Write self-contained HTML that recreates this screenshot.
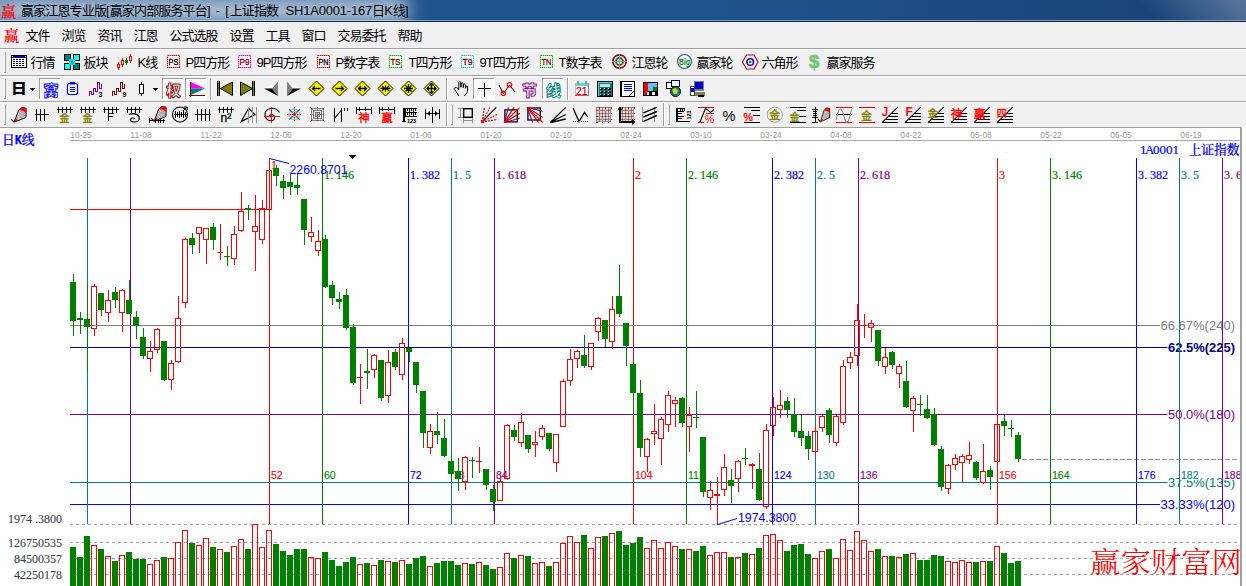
<!DOCTYPE html><html><head><meta charset="utf-8"><title>赢家江恩专业版</title><style>
html,body{margin:0;padding:0}
body{width:1246px;height:586px;overflow:hidden;background:#f0f0f0;position:relative;font-family:"Liberation Sans","Noto Sans CJK SC",sans-serif;font-size:12px;color:#000}
.abs{position:absolute}
#title{left:0;top:0;width:1246px;height:22px;overflow:hidden;background:linear-gradient(90deg,#20548f 0px,#1f538f 700px,#1b467b 1100px,#1a4377 1246px)}
#title .glow{left:-30px;top:-8px;width:440px;height:36px;background:rgba(255,255,255,.5);filter:blur(9px);border-radius:14px}
#title .glow2{left:10px;top:5px;width:395px;height:11px;background:rgba(255,255,255,.22);filter:blur(4px)}
#title .hl{left:0;top:20px;width:1246px;height:1px;background:rgba(255,255,255,.45)}
#title .dk{left:0;top:21px;width:1246px;height:1px;background:#13294a}
#title .shine{right:0;top:0;width:160px;height:20px;background:linear-gradient(225deg,rgba(255,255,255,.28),rgba(255,255,255,0) 60%)}
#title .txt{left:21px;top:3px;font-size:13px;line-height:16px;white-space:nowrap;color:#000;letter-spacing:0}
#title .txt b{font-weight:normal;letter-spacing:-0.85px}
#title .txt i{font-style:normal;letter-spacing:0.8px}
#title .txt u{text-decoration:none;letter-spacing:-0.2px}
.ico{color:#f01020;font-family:"Noto Serif CJK SC",serif;font-weight:700;letter-spacing:0 !important}
#menu{left:0;top:22px;width:1246px;height:26px;background:#f0f0f0}
#menu span{position:absolute;top:7px;line-height:14px;white-space:nowrap;font-size:13px;letter-spacing:-1px}
.sep{left:0;width:1246px;height:1px}
.tb span{position:absolute;line-height:14px;white-space:nowrap;font-size:13px;letter-spacing:-1px}
svg{position:absolute;left:0;top:0}
</style></head><body>
<div id="title" class="abs"><div class="abs glow"></div><div class="abs glow2"></div><div class="abs shine"></div><div class="abs hl"></div><div class="abs dk"></div><span class="abs ico" style="left:1px;top:3px;font-size:15px;line-height:16px">赢</span><span class="abs txt"><b>赢家江恩专业版</b>[<b>赢家内部服务平台</b><i>] - [</i><b>上证指数</b>&nbsp; <u>SH1A0001-167</u><b>日</b>K<b>线</b>]</span></div>
<div id="menu" class="abs"><span class="ico" style="left:4px;top:5px;font-size:15px;line-height:16px">赢</span>
<span style="left:25.5px">文件</span>
<span style="left:61.5px">浏览</span>
<span style="left:97.5px">资讯</span>
<span style="left:133.5px">江恩</span>
<span style="left:169.5px">公式选股</span>
<span style="left:229.5px">设置</span>
<span style="left:265.5px">工具</span>
<span style="left:301.5px">窗口</span>
<span style="left:337.5px">交易委托</span>
<span style="left:397.5px">帮助</span>
</div>
<div class="abs sep" style="top:48px;background:#a0a0a0"></div><div class="abs sep" style="top:49px;background:#fff"></div>
<div class="abs sep" style="top:75px;background:#a0a0a0"></div><div class="abs sep" style="top:76px;background:#fff"></div>
<div class="abs sep" style="top:101px;background:#a0a0a0"></div><div class="abs sep" style="top:102px;background:#fff"></div>
<div class="abs sep" style="top:127px;background:#a0a0a0"></div>
<div class="tb">
<span style="left:30.5px;top:56px">行情</span>
<span style="left:83.5px;top:56px">板块</span>
<span style="left:137.5px;top:56px">K线</span>
<span style="left:185.5px;top:56px">P四方形</span>
<span style="left:256.5px;top:56px">9P四方形</span>
<span style="left:335.5px;top:56px">P数字表</span>
<span style="left:408.5px;top:56px">T四方形</span>
<span style="left:479.5px;top:56px">9T四方形</span>
<span style="left:558.5px;top:56px">T数字表</span>
<span style="left:631.5px;top:56px">江恩轮</span>
<span style="left:696.5px;top:56px">赢家轮</span>
<span style="left:761.5px;top:56px">六角形</span>
<span style="left:826.5px;top:56px">赢家服务</span>
</div>
<svg width="1246" height="586" viewBox="0 0 1246 586" shape-rendering="crispEdges">
<g><rect x="4" y="52" width="1" height="21" fill="#ffffff"/><rect x="5" y="52" width="1" height="21" fill="#a0a0a0"/><rect x="4" y="72" width="2" height="1" fill="#a0a0a0"/><rect x="11" y="55" width="16" height="13" fill="#000"/><rect x="12" y="56" width="14" height="11" fill="#fff"/><rect x="12" y="56" width="14" height="2" fill="#0000c0"/><rect x="13" y="59" width="2" height="1" fill="#000"/><rect x="16" y="59" width="2" height="1" fill="#000"/><rect x="19" y="59" width="2" height="1" fill="#000"/><rect x="22" y="59" width="2" height="1" fill="#000"/><rect x="13" y="61" width="2" height="1" fill="#000"/><rect x="16" y="61" width="2" height="1" fill="#000"/><rect x="19" y="61" width="2" height="1" fill="#000"/><rect x="22" y="61" width="2" height="1" fill="#000"/><rect x="13" y="63" width="2" height="1" fill="#000"/><rect x="16" y="63" width="2" height="1" fill="#000"/><rect x="19" y="63" width="2" height="1" fill="#000"/><rect x="22" y="63" width="2" height="1" fill="#000"/><rect x="13" y="65" width="2" height="1" fill="#000"/><rect x="16" y="65" width="2" height="1" fill="#000"/><rect x="19" y="65" width="2" height="1" fill="#000"/><rect x="22" y="65" width="2" height="1" fill="#000"/><rect x="12" y="56" width="1" height="1" fill="#fff"/><rect x="25" y="56" width="1" height="1" fill="#fff"/><rect x="64" y="54" width="7" height="7" fill="#000"/><rect x="65" y="55" width="5" height="5" fill="#008080"/><rect x="73" y="54" width="7" height="7" fill="#000"/><rect x="74" y="55" width="5" height="5" fill="#00ffff"/><rect x="64" y="63" width="7" height="7" fill="#000"/><rect x="65" y="64" width="5" height="5" fill="#00ffff"/><rect x="73" y="63" width="7" height="7" fill="#000"/><rect x="74" y="64" width="5" height="5" fill="#008080"/><rect x="69" y="59" width="6" height="6" fill="#00e0e0"/><rect x="71" y="61" width="2" height="2" fill="#008080"/><rect x="118" y="62" width="1" height="8" fill="#ff0000"/><rect x="117" y="64" width="3" height="4" fill="#ff0000"/><rect x="118" y="65" width="1" height="2" fill="#fff"/><rect x="122" y="58" width="1" height="9" fill="#ff0000"/><rect x="121" y="60" width="3" height="5" fill="#ff0000"/><rect x="122" y="61" width="1" height="3" fill="#fff"/><rect x="126" y="58" width="1" height="7" fill="#008000"/><rect x="125" y="60" width="3" height="3" fill="#008000"/><rect x="130" y="54" width="1" height="9" fill="#ff0000"/><rect x="129" y="56" width="3" height="5" fill="#ff0000"/><rect x="130" y="57" width="1" height="3" fill="#fff"/><rect x="167" y="55" width="13" height="13" fill="#fff"/><rect x="167.5" y="55.5" width="12" height="12" fill="none" stroke="#ff0000" stroke-width="1" stroke-dasharray="1 1"/><rect x="167.5" y="55.5" width="12" height="12" fill="none" stroke="#ff0000" stroke-width="1" opacity="0.55"/><text x="173.5" y="65" font-size="8.5" fill="#000" font-family="Liberation Sans, sans-serif" text-anchor="middle" style="shape-rendering:geometricPrecision" textLength="10" lengthAdjust="spacingAndGlyphs" stroke="#000" stroke-width="0.3">PS</text><rect x="238" y="55" width="13" height="13" fill="#fff"/><rect x="238.5" y="55.5" width="12" height="12" fill="none" stroke="#ff00ff" stroke-width="1" stroke-dasharray="1 1"/><rect x="238.5" y="55.5" width="12" height="12" fill="none" stroke="#ff00ff" stroke-width="1" opacity="0.55"/><text x="244.5" y="65" font-size="8.5" fill="#800000" font-family="Liberation Sans, sans-serif" text-anchor="middle" style="shape-rendering:geometricPrecision" textLength="10" lengthAdjust="spacingAndGlyphs" stroke="#800000" stroke-width="0.3">P9</text><rect x="317" y="55" width="13" height="13" fill="#fff"/><rect x="317.5" y="55.5" width="12" height="12" fill="none" stroke="#ff0000" stroke-width="1" stroke-dasharray="1 1"/><rect x="317.5" y="55.5" width="12" height="12" fill="none" stroke="#ff0000" stroke-width="1" opacity="0.55"/><text x="323.5" y="65" font-size="8.5" fill="#000" font-family="Liberation Sans, sans-serif" text-anchor="middle" style="shape-rendering:geometricPrecision" textLength="10" lengthAdjust="spacingAndGlyphs" stroke="#000" stroke-width="0.3">PN</text><rect x="389" y="55" width="13" height="13" fill="#fff"/><rect x="389.5" y="55.5" width="12" height="12" fill="none" stroke="#00c000" stroke-width="1" stroke-dasharray="1 1"/><rect x="389.5" y="55.5" width="12" height="12" fill="none" stroke="#00c000" stroke-width="1" opacity="0.55"/><text x="395.5" y="65" font-size="8.5" fill="#800000" font-family="Liberation Sans, sans-serif" text-anchor="middle" style="shape-rendering:geometricPrecision" textLength="10" lengthAdjust="spacingAndGlyphs" stroke="#800000" stroke-width="0.3">TS</text><rect x="461" y="55" width="13" height="13" fill="#fff"/><rect x="461.5" y="55.5" width="12" height="12" fill="none" stroke="#00d0d0" stroke-width="1" stroke-dasharray="1 1"/><rect x="461.5" y="55.5" width="12" height="12" fill="none" stroke="#00d0d0" stroke-width="1" opacity="0.55"/><text x="467.5" y="65" font-size="8.5" fill="#800000" font-family="Liberation Sans, sans-serif" text-anchor="middle" style="shape-rendering:geometricPrecision" textLength="10" lengthAdjust="spacingAndGlyphs" stroke="#800000" stroke-width="0.3">T9</text><rect x="540" y="55" width="13" height="13" fill="#fff"/><rect x="540.5" y="55.5" width="12" height="12" fill="none" stroke="#00c000" stroke-width="1" stroke-dasharray="1 1"/><rect x="540.5" y="55.5" width="12" height="12" fill="none" stroke="#00c000" stroke-width="1" opacity="0.55"/><text x="546.5" y="65" font-size="8.5" fill="#800000" font-family="Liberation Sans, sans-serif" text-anchor="middle" style="shape-rendering:geometricPrecision" textLength="10" lengthAdjust="spacingAndGlyphs" stroke="#800000" stroke-width="0.3">TN</text><g style="shape-rendering:geometricPrecision"><circle cx="619.5" cy="61.5" r="6.7" fill="#f4eaea" stroke="#7b1020" stroke-width="1.7"/><circle cx="619.5" cy="61.5" r="3.6" fill="#f0f0f0" stroke="#0a6a1a" stroke-width="1.6"/><circle cx="619.5" cy="61.5" r="1.3" fill="#f08060"/><path d="M612 61.5h15M619.5 54v15" stroke="#909090" stroke-width="0.8"/></g><g style="shape-rendering:geometricPrecision"><circle cx="684.5" cy="61.5" r="7" fill="#f4f8f8" stroke="#2a5a80" stroke-width="1.2"/><text x="684.5" y="65" font-size="8.5" fill="#208020" font-family="Liberation Sans, sans-serif" text-anchor="middle" font-weight="bold" textLength="11" lengthAdjust="spacingAndGlyphs">Big</text></g><g style="shape-rendering:geometricPrecision"><path d="M742.5 62l4-7h7.5l4 7l-4 7h-7.5z" fill="#f6f0f0" stroke="#b01020" stroke-width="1.2"/><circle cx="750.2" cy="62" r="3.3" fill="#fff" stroke="#0000c0" stroke-width="1.5"/><circle cx="750.2" cy="62" r="1.3" fill="#008000"/></g><text x="809" y="68.2" font-size="18.5" fill="#78c478" font-family="Liberation Sans, sans-serif" font-weight="bold" stroke="#78c478" stroke-width="0.7" style="shape-rendering:geometricPrecision">$</text><rect x="4" y="79" width="1" height="20" fill="#ffffff"/><rect x="5" y="79" width="1" height="20" fill="#a0a0a0"/><rect x="4" y="98" width="2" height="1" fill="#a0a0a0"/><g transform="translate(10.9,93.2) scale(1.22,1.06)"><text x="0" y="0" font-size="13" fill="#000" font-family="Noto Sans CJK SC, sans-serif" font-weight="900" style="shape-rendering:geometricPrecision">日</text></g><path d="M30 88h5l-2.5 3z" fill="#000"/><rect x="39" y="78" width="22" height="22" fill="#f9f9f9"/><rect x="39" y="78" width="22" height="1" fill="#a0a0a0"/><rect x="39" y="78" width="1" height="22" fill="#a0a0a0"/><rect x="39" y="99" width="22" height="1" fill="#ffffff"/><rect x="60" y="78" width="1" height="22" fill="#ffffff"/><text x="43.5" y="95.5" font-size="15" fill="#fafafa" font-family="Noto Sans CJK SC, sans-serif" font-weight="900" stroke-width="0.9" stroke="#0000ff" style="shape-rendering:geometricPrecision">窝</text><g style="shape-rendering:geometricPrecision"><rect x="67.5" y="83.5" width="10" height="11" rx="2" fill="#fff" stroke="#0000ff" stroke-width="1.2"/><rect x="70" y="82" width="5" height="2.5" fill="#0000ff"/><path d="M70 87.5h5M70 89.5h5M70 91.5h5" stroke="#0000ff" stroke-width="1"/></g><path d="M89.5 96V91.5H91.5V94.5H93.5V88.5H95.5V91.5H97.5V82.5H99.5V88.5H101.5V84" stroke="#800080" fill="none" stroke-width="1" /><text x="98.5" y="97" font-size="7" fill="#000" font-family="Liberation Sans, sans-serif" font-weight="bold" style="shape-rendering:geometricPrecision">3</text><path d="M112.5 96V91.5H114.5V94.5H116.5V88.5H118.5V91.5H120.5V82.5H122.5V88.5H124.5V84" stroke="#800000" fill="none" stroke-width="1" /><text x="122.5" y="97" font-size="7" fill="#000" font-family="Liberation Sans, sans-serif" font-weight="bold" style="shape-rendering:geometricPrecision">9</text><rect x="141" y="82" width="1" height="14" fill="#000"/><rect x="139" y="84" width="5" height="10" fill="#000"/><rect x="140" y="85" width="3" height="8" fill="#fff"/><path d="M153 88h5l-2.5 3z" fill="#000"/><rect x="162" y="78" width="22" height="22" fill="#f9f9f9"/><rect x="162" y="78" width="22" height="1" fill="#a0a0a0"/><rect x="162" y="78" width="1" height="22" fill="#a0a0a0"/><rect x="162" y="99" width="22" height="1" fill="#ffffff"/><rect x="183" y="78" width="1" height="22" fill="#ffffff"/><text x="166" y="95.5" font-size="15" fill="#fafafa" font-family="Noto Sans CJK SC, sans-serif" font-weight="900" stroke-width="0.9" stroke="#800000" style="shape-rendering:geometricPrecision">权</text><rect x="185" y="78" width="22" height="22" fill="#f9f9f9"/><rect x="185" y="78" width="22" height="1" fill="#a0a0a0"/><rect x="185" y="78" width="1" height="22" fill="#a0a0a0"/><rect x="185" y="99" width="22" height="1" fill="#ffffff"/><rect x="206" y="78" width="1" height="22" fill="#ffffff"/><path d="M191 82L205 88.5H191z" fill="#ff00ff" style="shape-rendering:geometricPrecision"/><path d="M191 88.5H205L191 95z" fill="#008080" style="shape-rendering:geometricPrecision"/><rect x="190" y="82" width="1" height="15" fill="#800000"/><rect x="189" y="95" width="16" height="1" fill="#800000"/><rect x="210" y="78" width="1" height="22" fill="#a0a0a0"/><rect x="211" y="78" width="1" height="22" fill="#ffffff"/><path d="M232.5 82L220.5 88.5L232.5 95.5z" fill="#808000" stroke="#000" stroke-width="1" style="shape-rendering:geometricPrecision"/><rect x="217" y="81" width="3" height="15" fill="#000"/><rect x="218" y="81" width="1" height="15" fill="#808000"/><path d="M240.5 82L252.5 88.5L240.5 95.5z" fill="#808000" stroke="#000" stroke-width="1" style="shape-rendering:geometricPrecision"/><rect x="252" y="81" width="3" height="15" fill="#000"/><rect x="253" y="81" width="1" height="15" fill="#808000"/><g style="shape-rendering:geometricPrecision"><path d="M264 88.5L278 81.5L272 88.5z" fill="#fff"/><path d="M278 81.5V96L272 88.5z" fill="#808080"/><path d="M264 88.5H272L278 96z" fill="#000"/><path d="M301 88.5L287 81.5L293 88.5z" fill="#fff"/><path d="M287 81.5V96L293 88.5z" fill="#808080"/><path d="M301 88.5H293L287 96z" fill="#000"/></g><path d="M309.0 88.5L316.5 81.0L324.0 88.5L316.5 96.0z" fill="#ffff00" stroke="#000" stroke-width="1" style="shape-rendering:geometricPrecision"/><path d="M320.5 88.5H312.5M315.0 86.0L312.5 88.5L315.0 91.0" stroke="#000" fill="none" stroke-width="1.3" style="shape-rendering:geometricPrecision"/><path d="M332.0 88.5L339.5 81.0L347.0 88.5L339.5 96.0z" fill="#ffff00" stroke="#000" stroke-width="1" style="shape-rendering:geometricPrecision"/><path d="M335.5 88.5H343.5M341.0 86.0L343.5 88.5L341.0 91.0" stroke="#000" fill="none" stroke-width="1.3" style="shape-rendering:geometricPrecision"/><path d="M355.0 88.5L362.5 81.0L370.0 88.5L362.5 96.0z" fill="#ffff00" stroke="#000" stroke-width="1" style="shape-rendering:geometricPrecision"/><path d="M366.5 88.5H358.5M361.0 86.0L358.5 88.5L361.0 91.0M358.5 88.5H366.5M364.0 86.0L366.5 88.5L364.0 91.0" stroke="#000" fill="none" stroke-width="1.3" style="shape-rendering:geometricPrecision"/><path d="M378.0 88.5L385.5 81.0L393.0 88.5L385.5 96.0z" fill="#ffff00" stroke="#000" stroke-width="1" style="shape-rendering:geometricPrecision"/><path d="M380.5 88.5H390.5M382.0 86.0L384.5 88.5L382.0 91.0M389.0 86.0L386.5 88.5L389.0 91.0M385.5 85.5V91.5" stroke="#000" fill="none" stroke-width="1.3" style="shape-rendering:geometricPrecision"/><path d="M401.0 88.5L408.5 81.0L416.0 88.5L408.5 96.0z" fill="#ffff00" stroke="#000" stroke-width="1" style="shape-rendering:geometricPrecision"/><path d="M404.0 88.5H413.0M408.5 84.0V93.0M405.5 85.5L411.5 91.5M405.5 91.5L411.5 85.5" stroke="#000" fill="none" stroke-width="1.3" style="shape-rendering:geometricPrecision"/><path d="M424.0 88.5L431.5 81.0L439.0 88.5L431.5 96.0z" fill="#ffff00" stroke="#000" stroke-width="1" style="shape-rendering:geometricPrecision"/><path d="M427.0 88.5H436.0M431.5 83.5V93.5M429.5 85.5L431.5 83.5L433.5 85.5M429.5 91.5L431.5 93.5L433.5 91.5M429.0 86.5L427.0 88.5L429.0 90.5M434.0 86.5L436.0 88.5L434.0 90.5" stroke="#000" fill="none" stroke-width="1.3" style="shape-rendering:geometricPrecision"/><rect x="446" y="78" width="1" height="22" fill="#a0a0a0"/><rect x="447" y="78" width="1" height="22" fill="#ffffff"/><path d="M459 96L456 91.5L454 88.8Q454.5 87 456.5 87.5L458.8 89.5V82.5Q459.7 80.6 460.8 82.5V87.5M461 87V83.5Q462.2 82 463.2 83.5V87.8M463.5 87.5V84.6Q464.6 83.3 465.5 84.8V88.5M465.8 88V86.4Q467 85.3 467.6 87V91.5L464.5 96" stroke="#000" fill="none" stroke-width="1" style="shape-rendering:geometricPrecision"/><rect x="473" y="78" width="22" height="22" fill="#f9f9f9"/><rect x="473" y="78" width="22" height="1" fill="#a0a0a0"/><rect x="473" y="78" width="1" height="22" fill="#a0a0a0"/><rect x="473" y="99" width="22" height="1" fill="#ffffff"/><rect x="494" y="78" width="1" height="22" fill="#ffffff"/><rect x="478" y="88" width="13" height="1" fill="#000"/><rect x="484" y="83" width="1" height="14" fill="#000"/><path d="M499 85L503.3 93.5L509.5 85L515 92" stroke="#000" fill="none" stroke-width="1" style="shape-rendering:geometricPrecision"/><g style="shape-rendering:geometricPrecision"><circle cx="503.3" cy="93.3" r="2.2" fill="none" stroke="#ff0000" stroke-width="1.2"/><circle cx="509.5" cy="84.7" r="2.2" fill="none" stroke="#ff0000" stroke-width="1.2"/></g><text x="522" y="95.5" font-size="15" fill="#fafafa" font-family="Noto Sans CJK SC, sans-serif" font-weight="900" stroke-width="0.9" stroke="#800080" style="shape-rendering:geometricPrecision">节</text><rect x="542" y="78" width="22" height="22" fill="#f9f9f9"/><rect x="542" y="78" width="22" height="1" fill="#a0a0a0"/><rect x="542" y="78" width="1" height="22" fill="#a0a0a0"/><rect x="542" y="99" width="22" height="1" fill="#ffffff"/><rect x="563" y="78" width="1" height="22" fill="#ffffff"/><text x="546" y="95.5" font-size="15" fill="#fafafa" font-family="Noto Sans CJK SC, sans-serif" font-weight="900" stroke-width="0.9" stroke="#008080" style="shape-rendering:geometricPrecision">线</text><rect x="567" y="78" width="1" height="22" fill="#a0a0a0"/><rect x="568" y="78" width="1" height="22" fill="#ffffff"/><rect x="575" y="83" width="14" height="13" fill="#808080"/><rect x="575" y="83" width="13" height="12" fill="#fff"/><rect x="575" y="83" width="13" height="3" fill="#40e0e0"/><rect x="575" y="83" width="1" height="12" fill="#c0c0c0"/><rect x="577" y="81" width="2" height="3" fill="#909090"/><rect x="585" y="81" width="2" height="3" fill="#909090"/><text x="581.7" y="95" font-size="10.5" fill="#ff0000" font-family="Liberation Sans, sans-serif" text-anchor="middle" textLength="11.5" lengthAdjust="spacingAndGlyphs" stroke="#ff0000" stroke-width="0.3" style="shape-rendering:geometricPrecision">21</text><rect x="597" y="81" width="16" height="16" fill="#000"/><rect x="598" y="82" width="14" height="14" fill="#008080"/><rect x="598" y="82" width="1" height="14" fill="#40e0e0"/><rect x="598" y="82" width="14" height="1" fill="#40e0e0"/><rect x="600" y="84" width="10" height="3" fill="#d8d8d8"/><rect x="600" y="88" width="3" height="2" fill="#000"/><rect x="600" y="88" width="1" height="1" fill="#e0e0e0"/><rect x="604" y="88" width="3" height="2" fill="#000"/><rect x="604" y="88" width="1" height="1" fill="#e0e0e0"/><rect x="608" y="88" width="3" height="2" fill="#000"/><rect x="608" y="88" width="1" height="1" fill="#e0e0e0"/><rect x="600" y="91" width="3" height="2" fill="#000"/><rect x="600" y="91" width="1" height="1" fill="#e0e0e0"/><rect x="604" y="91" width="3" height="2" fill="#000"/><rect x="604" y="91" width="1" height="1" fill="#e0e0e0"/><rect x="608" y="91" width="3" height="2" fill="#000"/><rect x="608" y="91" width="1" height="1" fill="#e0e0e0"/><rect x="600" y="94" width="3" height="2" fill="#000"/><rect x="600" y="94" width="1" height="1" fill="#e0e0e0"/><rect x="604" y="94" width="3" height="2" fill="#000"/><rect x="604" y="94" width="1" height="1" fill="#e0e0e0"/><rect x="608" y="94" width="3" height="2" fill="#000"/><rect x="608" y="94" width="1" height="1" fill="#e0e0e0"/><rect x="620" y="81" width="15" height="16" fill="#000"/><rect x="622" y="82" width="12" height="14" fill="#fff"/><rect x="624" y="84" width="8" height="1" fill="#0000ff"/><rect x="624" y="86" width="8" height="1" fill="#0000ff"/><rect x="624" y="88" width="8" height="1" fill="#0000ff"/><rect x="624" y="90" width="8" height="1" fill="#0000ff"/><path d="M629 96L634 91" stroke="#000" fill="none" stroke-width="1" style="shape-rendering:geometricPrecision"/><rect x="643" y="82" width="15" height="14" fill="#000"/><rect x="644" y="83" width="4" height="12" fill="#ff0000"/><rect x="648" y="83" width="9" height="8" fill="#60c0ff"/><rect x="653" y="87" width="4" height="4" fill="#008000"/><rect x="647" y="92" width="8" height="3" fill="#fff"/><rect x="649" y="92" width="3" height="3" fill="#000"/><rect x="666" y="82" width="9" height="7" fill="#000"/><rect x="667" y="83" width="7" height="5" fill="#fff"/><rect x="671" y="80" width="9" height="7" fill="#000080"/><rect x="672" y="81" width="7" height="5" fill="#fff"/><circle cx="675.5" cy="91.5" r="5" fill="#008080" stroke="#000" stroke-width="1" style="shape-rendering:geometricPrecision"/><path d="M672 90l3-2l3 2l-1 4l-3 0z" fill="#e0d020" style="shape-rendering:geometricPrecision"/><rect x="694" y="81" width="10" height="10" fill="#808080"/><rect x="695" y="82" width="8" height="7" fill="#0000d0"/><rect x="692" y="92" width="13" height="4" fill="#808060"/><rect x="690" y="86" width="5" height="10" fill="#fff"/><rect x="690" y="88" width="5" height="4" fill="#0000c0"/><path d="M690.5 86.5h4v9h-4z" stroke="#404040" fill="none" stroke-width="1" /><rect x="698" y="95" width="6" height="2" fill="#000"/><rect x="4" y="105" width="1" height="20" fill="#ffffff"/><rect x="5" y="105" width="1" height="20" fill="#a0a0a0"/><rect x="4" y="124" width="2" height="1" fill="#a0a0a0"/><g style="shape-rendering:geometricPrecision" transform="translate(11,107)"><path d="M3.4 14.6L7.6 3.3L11 0.4L15 1.3V10.4L6.8 13.8z" fill="#c4c4c4" stroke="#000" stroke-width="1"/><path d="M8.5 6l5.5 3M7.5 8.5l5 3M10 4.5l4.5 2" stroke="#8a8a8a" stroke-width="0.8"/><path d="M7.6 3.3L11 0.4L15.3 1.3V5.8L11.8 3.8z" fill="#ff0000"/><path d="M3.4 14.6L4.7 11L7.2 13.5z" fill="#ff0000"/><path d="M0 12.1L3.4 15.4" stroke="#000" stroke-width="1.2"/></g><rect x="35" y="114" width="14" height="1" fill="#000"/><rect x="36" y="109" width="1" height="12" fill="#000"/><rect x="40" y="109" width="1" height="12" fill="#000"/><rect x="44" y="109" width="1" height="12" fill="#000"/><rect x="57" y="109" width="16" height="1" fill="#000"/><rect x="58" y="107" width="1" height="6" fill="#000"/><rect x="62" y="107" width="1" height="6" fill="#000"/><rect x="66" y="107" width="1" height="6" fill="#000"/><rect x="70" y="107" width="1" height="6" fill="#000"/><text x="59.5" y="121.5" font-size="10" fill="#808000" font-family="Noto Sans CJK SC, sans-serif" stroke="#808000" stroke-width="0.35" style="shape-rendering:geometricPrecision">金</text><rect x="80" y="109" width="16" height="1" fill="#000"/><rect x="81" y="107" width="1" height="6" fill="#000"/><rect x="85" y="107" width="1" height="6" fill="#000"/><rect x="89" y="107" width="1" height="6" fill="#000"/><rect x="93" y="107" width="1" height="6" fill="#000"/><text x="82.5" y="121.5" font-size="10" fill="#808000" font-family="Noto Sans CJK SC, sans-serif" stroke="#808000" stroke-width="0.35" style="shape-rendering:geometricPrecision">金</text><rect x="103" y="109" width="16" height="1" fill="#000"/><rect x="104" y="107" width="1" height="6" fill="#000"/><rect x="108" y="107" width="1" height="6" fill="#000"/><rect x="112" y="107" width="1" height="6" fill="#000"/><rect x="116" y="107" width="1" height="6" fill="#000"/><rect x="108" y="113" width="1" height="8" fill="#000"/><rect x="108" y="113" width="6" height="1" fill="#000"/><rect x="108" y="116" width="5" height="1" fill="#000"/><rect x="126" y="109" width="16" height="1" fill="#000"/><rect x="127" y="107" width="1" height="6" fill="#000"/><rect x="131" y="107" width="1" height="6" fill="#000"/><rect x="135" y="107" width="1" height="6" fill="#000"/><rect x="139" y="107" width="1" height="6" fill="#000"/><path d="M128.8 114.5Q136 112 139 116.5Q140.5 121.5 135 122Q130 122 130.5 119.5Q131.5 117 135 118.7" stroke="#000" fill="none" stroke-width="1.2" style="shape-rendering:geometricPrecision"/><g style="shape-rendering:geometricPrecision" transform="translate(151,106)"><path d="M3.4 14.6L7.6 3.3L11 0.4L15 1.3V10.4L6.8 13.8z" fill="#c4c4c4" stroke="#000" stroke-width="1"/><path d="M8.5 6l5.5 3M7.5 8.5l5 3M10 4.5l4.5 2" stroke="#8a8a8a" stroke-width="0.8"/><path d="M7.6 3.3L11 0.4L15.3 1.3V5.8L11.8 3.8z" fill="#ff0000"/><path d="M3.4 14.6L4.7 11L7.2 13.5z" fill="#ff0000"/><path d="M0 12.1L3.4 15.4" stroke="#000" stroke-width="1.2"/></g><rect x="149" y="120" width="16" height="1" fill="#000"/><rect x="149" y="118" width="1" height="5" fill="#000"/><rect x="155.0" y="118.5" width="1" height="4" fill="#000"/><rect x="157.5" y="118.5" width="1" height="4" fill="#000"/><rect x="160.0" y="118.5" width="1" height="4" fill="#000"/><rect x="162.5" y="118.5" width="1" height="4" fill="#000"/><circle cx="180" cy="114.5" r="7.5" fill="none" stroke="#000" stroke-width="1.1" style="shape-rendering:geometricPrecision"/><rect x="174" y="114" width="13" height="1" fill="#000"/><rect x="175" y="111" width="1" height="7" fill="#000"/><rect x="177" y="112" width="1" height="5" fill="#000"/><rect x="179" y="111" width="1" height="7" fill="#000"/><rect x="181" y="112" width="1" height="5" fill="#000"/><rect x="183" y="111" width="1" height="7" fill="#000"/><rect x="185" y="112" width="1" height="5" fill="#000"/><path d="M183 111L187 107M184 107h3.3v3" stroke="#000" fill="none" stroke-width="1" style="shape-rendering:geometricPrecision"/><rect x="195" y="114" width="16" height="1" fill="#000"/><rect x="197" y="109" width="1" height="12" fill="#000"/><rect x="201" y="109" width="1" height="12" fill="#000"/><rect x="205" y="109" width="1" height="12" fill="#000"/><rect x="209" y="109" width="1" height="12" fill="#000"/><rect x="218" y="109" width="16" height="1" fill="#000"/><rect x="219" y="107" width="1" height="6" fill="#000"/><rect x="223" y="107" width="1" height="6" fill="#000"/><rect x="227" y="107" width="1" height="6" fill="#000"/><rect x="231" y="107" width="1" height="6" fill="#000"/><text x="220.5" y="122.3" font-size="12" fill="#000" font-family="Liberation Sans, sans-serif" stroke="#000" stroke-width="0.3" style="shape-rendering:geometricPrecision">n²</text><path d="M241.2 121.6L248.7 108.3L255 114.5z" stroke="#000" fill="none" stroke-width="1.1" style="shape-rendering:geometricPrecision"/><rect x="248" y="107" width="1" height="16" fill="#909090"/><rect x="252" y="107" width="1" height="16" fill="#909090"/><rect x="256" y="107" width="1" height="16" fill="#909090"/><g style="shape-rendering:geometricPrecision"><path d="M279.6 112.4Q276 107.5 271 108.3Q265 109.5 265 114.5Q265.5 120.5 270.5 120.8Q274.6 120.5 274.6 117.5Q274 114.5 271.5 114.5Q269 115 269 117" fill="none" stroke="#000" stroke-width="1.1"/></g><rect x="264" y="116" width="16" height="1" fill="#ff0000"/><rect x="271" y="107" width="1" height="16" fill="#ff0000"/><g style="shape-rendering:geometricPrecision"><circle cx="294.5" cy="114.5" r="5.5" fill="none" stroke="#909090" stroke-width="0.8"/><circle cx="294.5" cy="114.5" r="3" fill="none" stroke="#909090" stroke-width="0.8"/><path d="M287.0 114.5H302.0M294.5 107.0V122.0" stroke="#ff0000" stroke-dasharray="1.5 1"/><path d="M289.2 109.2L299.8 119.8M289.2 119.8L299.8 109.2" stroke="#008080" stroke-width="1.3" stroke-dasharray="5 1 3 1 5"/><circle cx="294.5" cy="114.5" r="1.3" fill="#ff0000"/></g><g><rect x="311.5" y="108.5" width="12" height="12" fill="none" stroke="#808080"/><rect x="313.5" y="110.5" width="8" height="8" fill="none" stroke="#808080"/><rect x="315.5" y="112.5" width="4" height="4" fill="none" stroke="#808080"/></g><g style="shape-rendering:geometricPrecision"><path d="M310.0 114.5H325.0M317.5 107.0V122.0" stroke="#008080" stroke-dasharray="1.5 1"/><path d="M310.5 107.5L324.5 121.5M310.5 121.5L324.5 107.5" stroke="#ff0000" stroke-dasharray="1.5 1.5"/></g><rect x="334" y="108" width="1" height="14" fill="#000"/><rect x="341" y="108" width="1" height="14" fill="#000"/><path d="M334.5 118.3L341.6 110" stroke="#000" fill="none" stroke-width="1.1" style="shape-rendering:geometricPrecision"/><rect x="344" y="108" width="1" height="3" fill="#000"/><rect x="347" y="108" width="1" height="3" fill="#000"/><rect x="356" y="109" width="16" height="1" fill="#000"/><rect x="356" y="107" width="1" height="7" fill="#000"/><rect x="359" y="107" width="1" height="4" fill="#000"/><rect x="365" y="107" width="1" height="4" fill="#000"/><rect x="371" y="107" width="1" height="7" fill="#000"/><text x="358.5" y="122" font-size="11" fill="#ff0000" font-family="Noto Sans CJK SC, sans-serif" stroke="#ff0000" stroke-width="0.35" style="shape-rendering:geometricPrecision">神</text><rect x="379" y="109" width="16" height="1" fill="#000"/><rect x="379" y="107" width="1" height="7" fill="#000"/><rect x="382" y="107" width="1" height="4" fill="#000"/><rect x="388" y="107" width="1" height="4" fill="#000"/><rect x="394" y="107" width="1" height="7" fill="#000"/><text x="381.5" y="122" font-size="11" fill="#ff0000" font-family="Noto Sans CJK SC, sans-serif" stroke="#ff0000" stroke-width="0.35" style="shape-rendering:geometricPrecision">赢</text><rect x="403" y="108" width="2" height="14" fill="#000"/><rect x="403" y="108" width="14" height="1" fill="#000"/><rect x="405" y="108" width="1" height="4" fill="#000"/><rect x="407" y="108" width="1" height="3" fill="#000"/><rect x="409" y="108" width="1" height="4" fill="#000"/><rect x="411" y="108" width="1" height="3" fill="#000"/><rect x="413" y="108" width="1" height="4" fill="#000"/><rect x="415" y="108" width="1" height="3" fill="#000"/><rect x="405" y="112" width="12" height="1" fill="#000"/><rect x="405" y="112" width="1" height="4" fill="#000"/><rect x="407" y="112" width="1" height="3" fill="#000"/><rect x="409" y="112" width="1" height="4" fill="#000"/><rect x="411" y="112" width="1" height="3" fill="#000"/><rect x="413" y="112" width="1" height="4" fill="#000"/><rect x="415" y="112" width="1" height="3" fill="#000"/><rect x="405" y="116" width="12" height="1" fill="#000"/><rect x="402" y="121" width="4" height="1" fill="#000"/><text x="407" y="122.5" font-size="5.5" fill="#000" font-family="Liberation Sans, sans-serif" font-weight="bold" style="shape-rendering:geometricPrecision">123</text><rect x="425" y="109" width="1" height="10" fill="#000"/><rect x="439" y="109" width="1" height="10" fill="#000"/><rect x="432" y="107" width="1" height="16" fill="#000"/><rect x="426" y="113" width="13" height="1" fill="#000"/><path d="M427 113.5l3-2.5v5zM438 113.5l-3-2.5v5z" fill="#000" style="shape-rendering:geometricPrecision"/><rect x="446" y="103" width="1" height="23" fill="#a0a0a0"/><rect x="447" y="103" width="1" height="23" fill="#ffffff"/><rect x="451" y="105" width="1" height="20" fill="#ffffff"/><rect x="452" y="105" width="1" height="20" fill="#a0a0a0"/><rect x="451" y="124" width="2" height="1" fill="#a0a0a0"/><rect x="463.7" y="108.7" width="8.6" height="8.6" fill="none" stroke="#000" stroke-width="1.4" style="shape-rendering:geometricPrecision"/><rect x="460" y="108" width="1" height="10" fill="#909090"/><rect x="458" y="108" width="5" height="1" fill="#909090"/><rect x="458" y="117" width="5" height="1" fill="#909090"/><rect x="463" y="120" width="10" height="1" fill="#909090"/><rect x="463" y="118" width="1" height="5" fill="#909090"/><rect x="472" y="118" width="1" height="5" fill="#909090"/><path d="M482 122L484.5 107.4M482 122L497 119.5" stroke="#900000" fill="none" stroke-width="1.1" style="shape-rendering:geometricPrecision" stroke-dasharray="2 1"/><path d="M482 122L490 107.4M482 122L497 114.5" stroke="#ff0000" fill="none" stroke-width="1.1" style="shape-rendering:geometricPrecision" stroke-dasharray="2 1"/><path d="M482 122L496.2 107.4" stroke="#000" fill="none" stroke-width="1.1" style="shape-rendering:geometricPrecision"/><rect x="481" y="120" width="3" height="3" fill="#ff0000"/><rect x="504.9" y="109.9" width="12.4" height="12" fill="none" stroke="#000" stroke-width="1.3" style="shape-rendering:geometricPrecision"/><path d="M504.3 122.5L508.5 107.4M504.3 122.5L519.8 118.3" stroke="#800080" fill="none" stroke-width="1.1" style="shape-rendering:geometricPrecision"/><path d="M504.3 122.5L514 107.4M504.3 122.5L519.8 113.3" stroke="#900000" fill="none" stroke-width="1.1" style="shape-rendering:geometricPrecision"/><path d="M504.3 122.5L519.4 107.8" stroke="#ff0000" fill="none" stroke-width="1.2" style="shape-rendering:geometricPrecision"/><rect x="527.9" y="108" width="12.4" height="12" fill="none" stroke="#000" stroke-width="1.3" style="shape-rendering:geometricPrecision"/><path d="M527.3 107.4L532.7 122.5M527.3 107.4L542.7 111.2" stroke="#800080" fill="none" stroke-width="1.1" style="shape-rendering:geometricPrecision"/><path d="M527.3 107.4L538.6 122.5M527.3 107.4L542.7 117.4" stroke="#900000" fill="none" stroke-width="1.1" style="shape-rendering:geometricPrecision"/><path d="M527.3 107.4L542.7 122.5" stroke="#ff0000" fill="none" stroke-width="1.2" style="shape-rendering:geometricPrecision"/><path d="M550.3 122.5L565.7 107.4M551 122L565.7 114.5M551.5 122.3L565.7 119" stroke="#000" fill="none" stroke-width="1.3" style="shape-rendering:geometricPrecision"/><path d="M550 122.8l5-3.5l1 2.5z" fill="#000" style="shape-rendering:geometricPrecision"/><path d="M573.2 108.3L579 121.6L584.5 112.4L587.8 117" stroke="#000" fill="none" stroke-width="1.2" style="shape-rendering:geometricPrecision"/><path d="M573 121.5H588" stroke="#808080" stroke-dasharray="1 1"/><rect x="596" y="107" width="15" height="15" fill="#8c8c8c"/><rect x="597.2" y="108.2" width="1.6" height="1.6" fill="#fff" style="shape-rendering:geometricPrecision"/><rect x="597.2" y="111.2" width="1.6" height="1.6" fill="#fff" style="shape-rendering:geometricPrecision"/><rect x="597.2" y="114.2" width="1.6" height="1.6" fill="#fff" style="shape-rendering:geometricPrecision"/><rect x="597.2" y="117.2" width="1.6" height="1.6" fill="#fff" style="shape-rendering:geometricPrecision"/><rect x="597.2" y="120.2" width="1.6" height="1" fill="#fff" style="shape-rendering:geometricPrecision"/><rect x="600.2" y="108.2" width="1.6" height="1.6" fill="#fff" style="shape-rendering:geometricPrecision"/><rect x="600.2" y="111.2" width="1.6" height="1.6" fill="#fff" style="shape-rendering:geometricPrecision"/><rect x="600.2" y="114.2" width="1.6" height="1.6" fill="#fff" style="shape-rendering:geometricPrecision"/><rect x="600.2" y="117.2" width="1.6" height="1.6" fill="#fff" style="shape-rendering:geometricPrecision"/><rect x="600.2" y="120.2" width="1.6" height="1" fill="#fff" style="shape-rendering:geometricPrecision"/><rect x="603.2" y="108.2" width="1.6" height="1.6" fill="#fff" style="shape-rendering:geometricPrecision"/><rect x="603.2" y="111.2" width="1.6" height="1.6" fill="#fff" style="shape-rendering:geometricPrecision"/><rect x="603.2" y="114.2" width="1.6" height="1.6" fill="#fff" style="shape-rendering:geometricPrecision"/><rect x="603.2" y="117.2" width="1.6" height="1.6" fill="#fff" style="shape-rendering:geometricPrecision"/><rect x="603.2" y="120.2" width="1.6" height="1" fill="#fff" style="shape-rendering:geometricPrecision"/><rect x="606.2" y="108.2" width="1.6" height="1.6" fill="#fff" style="shape-rendering:geometricPrecision"/><rect x="606.2" y="111.2" width="1.6" height="1.6" fill="#fff" style="shape-rendering:geometricPrecision"/><rect x="606.2" y="114.2" width="1.6" height="1.6" fill="#fff" style="shape-rendering:geometricPrecision"/><rect x="606.2" y="117.2" width="1.6" height="1.6" fill="#fff" style="shape-rendering:geometricPrecision"/><rect x="606.2" y="120.2" width="1.6" height="1" fill="#fff" style="shape-rendering:geometricPrecision"/><rect x="609.2" y="108.2" width="1" height="1.6" fill="#fff" style="shape-rendering:geometricPrecision"/><rect x="609.2" y="111.2" width="1" height="1.6" fill="#fff" style="shape-rendering:geometricPrecision"/><rect x="609.2" y="114.2" width="1" height="1.6" fill="#fff" style="shape-rendering:geometricPrecision"/><rect x="609.2" y="117.2" width="1" height="1.6" fill="#fff" style="shape-rendering:geometricPrecision"/><rect x="609.2" y="120.2" width="1" height="1" fill="#fff" style="shape-rendering:geometricPrecision"/><rect x="596" y="109.5" width="1.5" height="1.5" fill="#ff0000"/><rect x="596" y="115.5" width="1.5" height="1.5" fill="#ff0000"/><rect x="596" y="121.5" width="1.5" height="1.5" fill="#ff0000"/><rect x="598.5" y="107" width="1.5" height="1.5" fill="#ff0000"/><rect x="598.5" y="112.5" width="1.5" height="1.5" fill="#ff0000"/><rect x="598.5" y="118.5" width="1.5" height="1.5" fill="#ff0000"/><rect x="601.5" y="109.5" width="1.5" height="1.5" fill="#ff0000"/><rect x="601.5" y="112.5" width="1.5" height="1.5" fill="#ff0000"/><rect x="601.5" y="115.5" width="1.5" height="1.5" fill="#ff0000"/><rect x="601.5" y="121.5" width="1.5" height="1.5" fill="#ff0000"/><rect x="604.5" y="107" width="1.5" height="1.5" fill="#ff0000"/><rect x="604.5" y="112.5" width="1.5" height="1.5" fill="#ff0000"/><rect x="604.5" y="115.5" width="1.5" height="1.5" fill="#ff0000"/><rect x="604.5" y="118.5" width="1.5" height="1.5" fill="#ff0000"/><rect x="607.5" y="109.5" width="1.5" height="1.5" fill="#ff0000"/><rect x="607.5" y="115.5" width="1.5" height="1.5" fill="#ff0000"/><rect x="607.5" y="121.5" width="1.5" height="1.5" fill="#ff0000"/><rect x="610.5" y="107" width="1.5" height="1.5" fill="#ff0000"/><rect x="610.5" y="112.5" width="1.5" height="1.5" fill="#ff0000"/><rect x="610.5" y="118.5" width="1.5" height="1.5" fill="#ff0000"/><rect x="619" y="107" width="15" height="15" fill="#8c8c8c"/><rect x="620.2" y="108.2" width="1.6" height="1.6" fill="#fff" style="shape-rendering:geometricPrecision"/><rect x="620.2" y="111.2" width="1.6" height="1.6" fill="#fff" style="shape-rendering:geometricPrecision"/><rect x="620.2" y="114.2" width="1.6" height="1.6" fill="#fff" style="shape-rendering:geometricPrecision"/><rect x="620.2" y="117.2" width="1.6" height="1.6" fill="#fff" style="shape-rendering:geometricPrecision"/><rect x="620.2" y="120.2" width="1.6" height="1" fill="#fff" style="shape-rendering:geometricPrecision"/><rect x="623.2" y="108.2" width="1.6" height="1.6" fill="#fff" style="shape-rendering:geometricPrecision"/><rect x="623.2" y="111.2" width="1.6" height="1.6" fill="#fff" style="shape-rendering:geometricPrecision"/><rect x="623.2" y="114.2" width="1.6" height="1.6" fill="#fff" style="shape-rendering:geometricPrecision"/><rect x="623.2" y="117.2" width="1.6" height="1.6" fill="#fff" style="shape-rendering:geometricPrecision"/><rect x="623.2" y="120.2" width="1.6" height="1" fill="#fff" style="shape-rendering:geometricPrecision"/><rect x="626.2" y="108.2" width="1.6" height="1.6" fill="#fff" style="shape-rendering:geometricPrecision"/><rect x="626.2" y="111.2" width="1.6" height="1.6" fill="#fff" style="shape-rendering:geometricPrecision"/><rect x="626.2" y="114.2" width="1.6" height="1.6" fill="#fff" style="shape-rendering:geometricPrecision"/><rect x="626.2" y="117.2" width="1.6" height="1.6" fill="#fff" style="shape-rendering:geometricPrecision"/><rect x="626.2" y="120.2" width="1.6" height="1" fill="#fff" style="shape-rendering:geometricPrecision"/><rect x="629.2" y="108.2" width="1.6" height="1.6" fill="#fff" style="shape-rendering:geometricPrecision"/><rect x="629.2" y="111.2" width="1.6" height="1.6" fill="#fff" style="shape-rendering:geometricPrecision"/><rect x="629.2" y="114.2" width="1.6" height="1.6" fill="#fff" style="shape-rendering:geometricPrecision"/><rect x="629.2" y="117.2" width="1.6" height="1.6" fill="#fff" style="shape-rendering:geometricPrecision"/><rect x="629.2" y="120.2" width="1.6" height="1" fill="#fff" style="shape-rendering:geometricPrecision"/><rect x="632.2" y="108.2" width="1" height="1.6" fill="#fff" style="shape-rendering:geometricPrecision"/><rect x="632.2" y="111.2" width="1" height="1.6" fill="#fff" style="shape-rendering:geometricPrecision"/><rect x="632.2" y="114.2" width="1" height="1.6" fill="#fff" style="shape-rendering:geometricPrecision"/><rect x="632.2" y="117.2" width="1" height="1.6" fill="#fff" style="shape-rendering:geometricPrecision"/><rect x="632.2" y="120.2" width="1" height="1" fill="#fff" style="shape-rendering:geometricPrecision"/><rect x="619" y="109.5" width="1.5" height="1.5" fill="#ff0000"/><rect x="619" y="115.5" width="1.5" height="1.5" fill="#ff0000"/><rect x="619" y="121.5" width="1.5" height="1.5" fill="#ff0000"/><rect x="621.5" y="107" width="1.5" height="1.5" fill="#ff0000"/><rect x="621.5" y="112.5" width="1.5" height="1.5" fill="#ff0000"/><rect x="621.5" y="118.5" width="1.5" height="1.5" fill="#ff0000"/><rect x="624.5" y="109.5" width="1.5" height="1.5" fill="#ff0000"/><rect x="624.5" y="112.5" width="1.5" height="1.5" fill="#ff0000"/><rect x="624.5" y="115.5" width="1.5" height="1.5" fill="#ff0000"/><rect x="624.5" y="121.5" width="1.5" height="1.5" fill="#ff0000"/><rect x="627.5" y="107" width="1.5" height="1.5" fill="#ff0000"/><rect x="627.5" y="112.5" width="1.5" height="1.5" fill="#ff0000"/><rect x="627.5" y="115.5" width="1.5" height="1.5" fill="#ff0000"/><rect x="627.5" y="118.5" width="1.5" height="1.5" fill="#ff0000"/><rect x="630.5" y="109.5" width="1.5" height="1.5" fill="#ff0000"/><rect x="630.5" y="115.5" width="1.5" height="1.5" fill="#ff0000"/><rect x="630.5" y="121.5" width="1.5" height="1.5" fill="#ff0000"/><rect x="633.5" y="107" width="1.5" height="1.5" fill="#ff0000"/><rect x="633.5" y="112.5" width="1.5" height="1.5" fill="#ff0000"/><rect x="633.5" y="118.5" width="1.5" height="1.5" fill="#ff0000"/><rect x="619" y="107" width="2" height="16" fill="#000"/><rect x="619" y="121" width="15" height="2" fill="#000"/><path d="M617.5 110l2.5-3.5l2.5 3.5zM632 119l3.5 3l-3.5 3z" fill="#000" style="shape-rendering:geometricPrecision"/><rect x="642" y="107" width="1" height="15" fill="#909090"/><rect x="654" y="107" width="1" height="15" fill="#909090"/><path d="M643.4 112.9L656.8 107.4M643.4 117L656.8 111.5M643.4 121.4L656.8 115.5" stroke="#000" fill="none" stroke-width="1.4" style="shape-rendering:geometricPrecision"/><rect x="663" y="103" width="1" height="23" fill="#a0a0a0"/><rect x="664" y="103" width="1" height="23" fill="#ffffff"/><rect x="668" y="105" width="1" height="20" fill="#ffffff"/><rect x="669" y="105" width="1" height="20" fill="#a0a0a0"/><rect x="668" y="124" width="2" height="1" fill="#a0a0a0"/><rect x="676" y="108" width="2" height="14" fill="#000"/><rect x="678" y="108" width="7" height="1" fill="#000"/><rect x="678" y="121" width="12" height="1" fill="#000"/><rect x="678" y="110.5" width="6" height="1" fill="#000"/><rect x="678" y="113.1" width="4" height="1" fill="#000"/><rect x="678" y="115.7" width="6" height="1" fill="#000"/><rect x="678" y="118.3" width="4" height="1" fill="#000"/><rect x="680" y="108" width="1" height="3" fill="#000"/><rect x="682" y="108" width="1" height="3" fill="#000"/><rect x="684" y="108" width="1" height="3" fill="#000"/><text x="0" y="0" font-size="5.5" fill="#000" font-family="Liberation Sans, sans-serif" font-weight="bold" transform="translate(690.5,119.5) rotate(-90)" style="shape-rendering:geometricPrecision">123</text><rect x="698" y="107" width="16" height="1" fill="#ff0000"/><rect x="706" y="113" width="8" height="1" fill="#ff0000"/><rect x="698" y="122" width="6" height="1" fill="#ff0000"/><path d="M700 122L705.5 108.3L710.5 112.4L713.9 109.5" stroke="#000" fill="none" stroke-width="1.1" style="shape-rendering:geometricPrecision"/><text x="704.8" y="122.8" font-size="10.5" fill="#ff0000" font-family="Liberation Sans, sans-serif" style="shape-rendering:geometricPrecision">%</text><text x="722.5" y="121" font-size="15.5" fill="#000" font-family="Liberation Sans, sans-serif" style="shape-rendering:geometricPrecision" textLength="13" lengthAdjust="spacingAndGlyphs">%</text><text x="743.5" y="121" font-size="10.5" fill="#ff0000" font-family="Liberation Sans, sans-serif" style="shape-rendering:geometricPrecision" stroke="#ff0000" stroke-width="0.3">%</text><rect x="744" y="107" width="16" height="1" fill="#000"/><rect x="751" y="110" width="9" height="1" fill="#000"/><rect x="753" y="115" width="7" height="1" fill="#000"/><rect x="744" y="122" width="16" height="1" fill="#000"/><circle cx="774.8" cy="114.7" r="7.6" fill="#f4f4ec" stroke="#a0a0a0" style="shape-rendering:geometricPrecision"/><text x="769.3" y="119" font-size="11" fill="#808000" font-family="Noto Sans CJK SC, sans-serif" stroke="#808000" stroke-width="0.35" style="shape-rendering:geometricPrecision">金</text><text x="789.8" y="120.5" font-size="10" fill="#808000" font-family="Noto Sans CJK SC, sans-serif" stroke="#808000" stroke-width="0.35" style="shape-rendering:geometricPrecision">金</text><rect x="790" y="107" width="16" height="1" fill="#000"/><rect x="797" y="110" width="9" height="1" fill="#000"/><rect x="799" y="116" width="7" height="1" fill="#000"/><rect x="790" y="122" width="16" height="1" fill="#000"/><rect x="815" y="107" width="1" height="16" fill="#000"/><rect x="812" y="109" width="6" height="1" fill="#000"/><rect x="813" y="111" width="4" height="1" fill="#000"/><rect x="813" y="113" width="4" height="1" fill="#000"/><rect x="813" y="115" width="4" height="1" fill="#000"/><rect x="812" y="117" width="6" height="1" fill="#000"/><rect x="812" y="122" width="6" height="1" fill="#000"/><g transform="translate(818,107.5) scale(0.78,0.95)"><g style="shape-rendering:geometricPrecision" transform="translate(0,0)"><path d="M3.4 14.6L7.6 3.3L11 0.4L15 1.3V10.4L6.8 13.8z" fill="#c4c4c4" stroke="#000" stroke-width="1"/><path d="M8.5 6l5.5 3M7.5 8.5l5 3M10 4.5l4.5 2" stroke="#8a8a8a" stroke-width="0.8"/><path d="M7.6 3.3L11 0.4L15.3 1.3V5.8L11.8 3.8z" fill="#ff0000"/><path d="M3.4 14.6L4.7 11L7.2 13.5z" fill="#ff0000"/><path d="M0 12.1L3.4 15.4" stroke="#000" stroke-width="1.2"/></g></g><rect x="836" y="107" width="16" height="1" fill="#ff0000"/><rect x="836" y="122" width="16" height="1" fill="#ff0000"/><rect x="836" y="114" width="16" height="1" fill="#000"/><path d="M836.2 120Q840 98 845 120Q848 128 851.5 109.5" stroke="#808080" fill="none" stroke-width="1" style="shape-rendering:geometricPrecision"/><rect x="859" y="107" width="16" height="1" fill="#ff0000"/><rect x="859" y="122" width="16" height="1" fill="#ff0000"/><text x="861" y="119.5" font-size="11" fill="#808000" font-family="Noto Sans CJK SC, sans-serif" stroke="#808000" stroke-width="0.35" style="shape-rendering:geometricPrecision">金</text><path d="M882 122.6L897.7 107.2" stroke="#000" fill="none" stroke-width="1.1" style="shape-rendering:geometricPrecision"/><rect x="892" y="113" width="6" height="1" fill="#000"/><rect x="889" y="116" width="9" height="1" fill="#000"/><rect x="886" y="119" width="12" height="1" fill="#000"/><rect x="882" y="122" width="16" height="1" fill="#000"/><text x="882" y="116" font-size="12" fill="#ff0000" font-family="Liberation Sans, sans-serif" stroke="#ff0000" stroke-width="0.4" style="shape-rendering:geometricPrecision">J</text><path d="M905 122.6L920.7 107.2" stroke="#000" fill="none" stroke-width="1.1" style="shape-rendering:geometricPrecision"/><rect x="915" y="113" width="6" height="1" fill="#000"/><rect x="912" y="116" width="9" height="1" fill="#000"/><rect x="909" y="119" width="12" height="1" fill="#000"/><rect x="905" y="122" width="16" height="1" fill="#000"/><text x="905.5" y="116" font-size="12" fill="#ff0000" font-family="Liberation Sans, sans-serif" font-weight="bold" style="shape-rendering:geometricPrecision">F</text><path d="M928 122.6L943.7 107.2" stroke="#000" fill="none" stroke-width="1.1" style="shape-rendering:geometricPrecision"/><rect x="938" y="113" width="6" height="1" fill="#000"/><rect x="935" y="116" width="9" height="1" fill="#000"/><rect x="932" y="119" width="12" height="1" fill="#000"/><rect x="928" y="122" width="16" height="1" fill="#000"/><text x="927.7" y="116.5" font-size="10" fill="#808000" font-family="Noto Sans CJK SC, sans-serif" stroke="#808000" stroke-width="0.35" style="shape-rendering:geometricPrecision">金</text><path d="M951 122.6L966.7 107.2" stroke="#000" fill="none" stroke-width="1.1" style="shape-rendering:geometricPrecision"/><rect x="961" y="113" width="6" height="1" fill="#000"/><rect x="958" y="116" width="9" height="1" fill="#000"/><rect x="955" y="119" width="12" height="1" fill="#000"/><rect x="951" y="122" width="16" height="1" fill="#000"/><text x="950.7" y="117.5" font-size="11.5" fill="#ff0000" font-family="Noto Sans CJK SC, sans-serif" stroke="#ff0000" stroke-width="0.35" style="shape-rendering:geometricPrecision">神</text><path d="M974 122.6L989.7 107.2" stroke="#000" fill="none" stroke-width="1.1" style="shape-rendering:geometricPrecision"/><rect x="984" y="113" width="6" height="1" fill="#000"/><rect x="981" y="116" width="9" height="1" fill="#000"/><rect x="978" y="119" width="12" height="1" fill="#000"/><rect x="974" y="122" width="16" height="1" fill="#000"/><text x="973.7" y="117.5" font-size="11.5" fill="#ff0000" font-family="Noto Sans CJK SC, sans-serif" stroke="#ff0000" stroke-width="0.35" style="shape-rendering:geometricPrecision">赢</text><path d="M997 122.6L1012.7 107.2" stroke="#000" fill="none" stroke-width="1.1" style="shape-rendering:geometricPrecision"/><rect x="1007" y="113" width="6" height="1" fill="#000"/><rect x="1004" y="116" width="9" height="1" fill="#000"/><rect x="1001" y="119" width="12" height="1" fill="#000"/><rect x="997" y="122" width="16" height="1" fill="#000"/><text x="996.7" y="116.5" font-size="10" fill="#ff0000" font-family="Noto Sans CJK SC, sans-serif" stroke="#ff0000" stroke-width="0.35" style="shape-rendering:geometricPrecision">四</text></g>
<rect x="0" y="128" width="1246" height="458" fill="#ffffff"/>
<g font-family="Liberation Sans, sans-serif" font-size="9.5" fill="#9a9a9a">
<text x="70.3" y="137.6" textLength="21.5" lengthAdjust="spacingAndGlyphs">10-25</text>
<text x="130.3" y="137.6" textLength="21.5" lengthAdjust="spacingAndGlyphs">11-08</text>
<text x="200.3" y="137.6" textLength="21.5" lengthAdjust="spacingAndGlyphs">11-22</text>
<text x="270.3" y="137.6" textLength="21.5" lengthAdjust="spacingAndGlyphs">12-06</text>
<text x="340.3" y="137.6" textLength="21.5" lengthAdjust="spacingAndGlyphs">12-20</text>
<text x="410.3" y="137.6" textLength="21.5" lengthAdjust="spacingAndGlyphs">01-06</text>
<text x="480.3" y="137.6" textLength="21.5" lengthAdjust="spacingAndGlyphs">01-20</text>
<text x="550.3" y="137.6" textLength="21.5" lengthAdjust="spacingAndGlyphs">02-10</text>
<text x="620.3" y="137.6" textLength="21.5" lengthAdjust="spacingAndGlyphs">02-24</text>
<text x="690.3" y="137.6" textLength="21.5" lengthAdjust="spacingAndGlyphs">03-10</text>
<text x="760.3" y="137.6" textLength="21.5" lengthAdjust="spacingAndGlyphs">03-24</text>
<text x="830.3" y="137.6" textLength="21.5" lengthAdjust="spacingAndGlyphs">04-08</text>
<text x="900.3" y="137.6" textLength="21.5" lengthAdjust="spacingAndGlyphs">04-22</text>
<text x="970.3" y="137.6" textLength="21.5" lengthAdjust="spacingAndGlyphs">05-08</text>
<text x="1040.3" y="137.6" textLength="21.5" lengthAdjust="spacingAndGlyphs">05-22</text>
<text x="1110.3" y="137.6" textLength="21.5" lengthAdjust="spacingAndGlyphs">06-05</text>
<text x="1180.3" y="137.6" textLength="21.5" lengthAdjust="spacingAndGlyphs">06-19</text>
</g>
<rect x="70" y="140" width="1170" height="1" fill="#a8a8a8"/>
<path d="M70 524.5H1238" stroke="#a0a0a0" stroke-width="1" stroke-dasharray="3 3" fill="none"/>
<path d="M70 542.5H1238" stroke="#a0a0a0" stroke-width="1" stroke-dasharray="3 3" fill="none"/>
<path d="M70 558.5H1238" stroke="#a0a0a0" stroke-width="1" stroke-dasharray="3 3" fill="none"/>
<path d="M70 574.5H1238" stroke="#a0a0a0" stroke-width="1" stroke-dasharray="3 3" fill="none"/>
<path d="M1022 459.5H1238" stroke="#909090" stroke-width="1" stroke-dasharray="5 2" fill="none"/>
<rect x="70" y="209" width="202" height="1" fill="#ff0000"/>
<g font-family="Liberation Sans, sans-serif" font-size="12" text-anchor="end" style="shape-rendering:auto">
<rect x="70" y="325" width="1090" height="1" fill="#808080"/>
<text x="1235" y="330" fill="#808080" textLength="74.5" lengthAdjust="spacingAndGlyphs">66.67%(240)</text>
<rect x="70" y="347" width="1097.5" height="1" fill="#000080"/>
<text x="1235" y="352" fill="#000080" font-weight="bold" textLength="67.0" lengthAdjust="spacingAndGlyphs">62.5%(225)</text>
<rect x="70" y="414" width="1097.5" height="1" fill="#800080"/>
<text x="1235" y="419" fill="#800080" textLength="67.0" lengthAdjust="spacingAndGlyphs">50.0%(180)</text>
<rect x="70" y="482" width="1097.5" height="1" fill="#008080"/>
<text x="1235" y="487" fill="#008080" textLength="67.0" lengthAdjust="spacingAndGlyphs">37.5%(135)</text>
<rect x="70" y="504" width="1090" height="1" fill="#0000ff"/>
<text x="1235" y="509" fill="#0000ff" textLength="74.5" lengthAdjust="spacingAndGlyphs">33.33%(120)</text>
</g>
<rect x="87" y="158" width="1" height="366" fill="#008080"/>
<rect x="130" y="158" width="1" height="366" fill="#800080"/>
<rect x="269" y="158" width="1" height="366" fill="#ff0000"/>
<rect x="322" y="158" width="1" height="366" fill="#008000"/>
<rect x="408" y="158" width="1" height="366" fill="#0000ff"/>
<rect x="451" y="158" width="1" height="366" fill="#008080"/>
<rect x="494" y="158" width="1" height="366" fill="#800080"/>
<rect x="633" y="158" width="1" height="366" fill="#ff0000"/>
<rect x="686" y="158" width="1" height="366" fill="#008000"/>
<rect x="772" y="158" width="1" height="366" fill="#0000ff"/>
<rect x="815" y="158" width="1" height="366" fill="#008080"/>
<rect x="858" y="158" width="1" height="366" fill="#800080"/>
<rect x="997" y="158" width="1" height="366" fill="#ff0000"/>
<rect x="1050" y="158" width="1" height="366" fill="#008000"/>
<rect x="1136" y="158" width="1" height="366" fill="#0000ff"/>
<rect x="1179" y="158" width="1" height="366" fill="#008080"/>
<rect x="1222" y="158" width="1" height="366" fill="#800080"/>
<rect x="270" y="470" width="13.6" height="10" fill="#fff"/>
<text x="271" y="479" font-family="Liberation Sans, sans-serif" font-size="10.5" fill="#ff0000" stroke="#ff0000" stroke-width="0.12">52</text>
<rect x="323" y="170" width="32" height="10" fill="#fff"/>
<text x="324.00 330.30 336.00 342.00 348.00" y="178.5" font-family="Liberation Serif, serif" font-size="12" fill="#008000" stroke="#008000" stroke-width="0.2" style="shape-rendering:auto">1.146</text>
<rect x="323" y="470" width="13.6" height="10" fill="#fff"/>
<text x="324" y="479" font-family="Liberation Sans, sans-serif" font-size="10.5" fill="#008000" stroke="#008000" stroke-width="0.12">60</text>
<rect x="409" y="170" width="32" height="10" fill="#fff"/>
<text x="410.00 416.30 422.00 428.00 434.00" y="178.5" font-family="Liberation Serif, serif" font-size="12" fill="#0000ff" stroke="#0000ff" stroke-width="0.2" style="shape-rendering:auto">1.382</text>
<rect x="409" y="470" width="13.6" height="10" fill="#fff"/>
<text x="410" y="479" font-family="Liberation Sans, sans-serif" font-size="10.5" fill="#0000ff" stroke="#0000ff" stroke-width="0.12">72</text>
<rect x="452" y="170" width="20" height="10" fill="#fff"/>
<text x="453.00 459.30 465.00" y="178.5" font-family="Liberation Serif, serif" font-size="12" fill="#008080" stroke="#008080" stroke-width="0.2" style="shape-rendering:auto">1.5</text>
<rect x="452" y="470" width="13.6" height="10" fill="#fff"/>
<text x="453" y="479" font-family="Liberation Sans, sans-serif" font-size="10.5" fill="#008080" stroke="#008080" stroke-width="0.12">78</text>
<rect x="495" y="170" width="32" height="10" fill="#fff"/>
<text x="496.00 502.30 508.00 514.00 520.00" y="178.5" font-family="Liberation Serif, serif" font-size="12" fill="#800080" stroke="#800080" stroke-width="0.2" style="shape-rendering:auto">1.618</text>
<rect x="495" y="470" width="13.6" height="10" fill="#fff"/>
<text x="496" y="479" font-family="Liberation Sans, sans-serif" font-size="10.5" fill="#800080" stroke="#800080" stroke-width="0.12">84</text>
<rect x="634" y="170" width="8" height="10" fill="#fff"/>
<text x="635.00" y="178.5" font-family="Liberation Serif, serif" font-size="12" fill="#ff0000" stroke="#ff0000" stroke-width="0.2" style="shape-rendering:auto">2</text>
<rect x="634" y="470" width="19.4" height="10" fill="#fff"/>
<text x="635" y="479" font-family="Liberation Sans, sans-serif" font-size="10.5" fill="#ff0000" stroke="#ff0000" stroke-width="0.12">104</text>
<rect x="687" y="170" width="32" height="10" fill="#fff"/>
<text x="688.00 694.30 700.00 706.00 712.00" y="178.5" font-family="Liberation Serif, serif" font-size="12" fill="#008000" stroke="#008000" stroke-width="0.2" style="shape-rendering:auto">2.146</text>
<rect x="687" y="470" width="19.4" height="10" fill="#fff"/>
<text x="688" y="479" font-family="Liberation Sans, sans-serif" font-size="10.5" fill="#008000" stroke="#008000" stroke-width="0.12">112</text>
<rect x="773" y="170" width="32" height="10" fill="#fff"/>
<text x="774.00 780.30 786.00 792.00 798.00" y="178.5" font-family="Liberation Serif, serif" font-size="12" fill="#0000ff" stroke="#0000ff" stroke-width="0.2" style="shape-rendering:auto">2.382</text>
<rect x="773" y="470" width="19.4" height="10" fill="#fff"/>
<text x="774" y="479" font-family="Liberation Sans, sans-serif" font-size="10.5" fill="#0000ff" stroke="#0000ff" stroke-width="0.12">124</text>
<rect x="816" y="170" width="20" height="10" fill="#fff"/>
<text x="817.00 823.30 829.00" y="178.5" font-family="Liberation Serif, serif" font-size="12" fill="#008080" stroke="#008080" stroke-width="0.2" style="shape-rendering:auto">2.5</text>
<rect x="816" y="470" width="19.4" height="10" fill="#fff"/>
<text x="817" y="479" font-family="Liberation Sans, sans-serif" font-size="10.5" fill="#008080" stroke="#008080" stroke-width="0.12">130</text>
<rect x="859" y="170" width="32" height="10" fill="#fff"/>
<text x="860.00 866.30 872.00 878.00 884.00" y="178.5" font-family="Liberation Serif, serif" font-size="12" fill="#800080" stroke="#800080" stroke-width="0.2" style="shape-rendering:auto">2.618</text>
<rect x="859" y="470" width="19.4" height="10" fill="#fff"/>
<text x="860" y="479" font-family="Liberation Sans, sans-serif" font-size="10.5" fill="#800080" stroke="#800080" stroke-width="0.12">136</text>
<rect x="998" y="170" width="8" height="10" fill="#fff"/>
<text x="999.00" y="178.5" font-family="Liberation Serif, serif" font-size="12" fill="#ff0000" stroke="#ff0000" stroke-width="0.2" style="shape-rendering:auto">3</text>
<rect x="998" y="470" width="19.4" height="10" fill="#fff"/>
<text x="999" y="479" font-family="Liberation Sans, sans-serif" font-size="10.5" fill="#ff0000" stroke="#ff0000" stroke-width="0.12">156</text>
<rect x="1051" y="170" width="32" height="10" fill="#fff"/>
<text x="1052.00 1058.30 1064.00 1070.00 1076.00" y="178.5" font-family="Liberation Serif, serif" font-size="12" fill="#008000" stroke="#008000" stroke-width="0.2" style="shape-rendering:auto">3.146</text>
<rect x="1051" y="470" width="19.4" height="10" fill="#fff"/>
<text x="1052" y="479" font-family="Liberation Sans, sans-serif" font-size="10.5" fill="#008000" stroke="#008000" stroke-width="0.12">164</text>
<rect x="1137" y="170" width="32" height="10" fill="#fff"/>
<text x="1138.00 1144.30 1150.00 1156.00 1162.00" y="178.5" font-family="Liberation Serif, serif" font-size="12" fill="#0000ff" stroke="#0000ff" stroke-width="0.2" style="shape-rendering:auto">3.382</text>
<rect x="1137" y="470" width="19.4" height="10" fill="#fff"/>
<text x="1138" y="479" font-family="Liberation Sans, sans-serif" font-size="10.5" fill="#0000ff" stroke="#0000ff" stroke-width="0.12">176</text>
<rect x="1180" y="170" width="20" height="10" fill="#fff"/>
<text x="1181.00 1187.30 1193.00" y="178.5" font-family="Liberation Serif, serif" font-size="12" fill="#008080" stroke="#008080" stroke-width="0.2" style="shape-rendering:auto">3.5</text>
<rect x="1180" y="470" width="19.4" height="10" fill="#fff"/>
<text x="1181" y="479" font-family="Liberation Sans, sans-serif" font-size="10.5" fill="#008080" stroke="#008080" stroke-width="0.12">182</text>
<rect x="1223" y="170" width="32" height="10" fill="#fff"/>
<text x="1224.00 1230.30 1236.00 1242.00 1248.00" y="178.5" font-family="Liberation Serif, serif" font-size="12" fill="#800080" stroke="#800080" stroke-width="0.2" style="shape-rendering:auto">3.618</text>
<rect x="1223" y="470" width="19.4" height="10" fill="#fff"/>
<text x="1224" y="479" font-family="Liberation Sans, sans-serif" font-size="10.5" fill="#800080" stroke="#800080" stroke-width="0.12">188</text>
<text x="271.00" y="168.5" font-family="Liberation Serif, serif" font-size="12" fill="#ff0000" stroke="#ff0000" stroke-width="0.2" style="shape-rendering:auto">1</text>
<rect x="73" y="274" width="1" height="62" fill="#008000"/>
<rect x="70" y="282" width="6" height="39" fill="#008000"/>
<rect x="80" y="312" width="1" height="22" fill="#008000"/>
<rect x="77" y="318" width="6" height="2" fill="#008000"/>
<rect x="87" y="283" width="1" height="89" fill="#008000"/>
<rect x="84" y="319" width="6" height="8" fill="#008000"/>
<rect x="94" y="284" width="1" height="2" fill="#ff0000"/>
<rect x="94" y="329" width="1" height="7" fill="#ff0000"/>
<path d="M91 286h6v43h-6z M92 287v41h4v-41z" fill="#ff0000" fill-rule="evenodd"/>
<rect x="101" y="293" width="1" height="23" fill="#008000"/>
<rect x="98" y="293" width="6" height="17" fill="#008000"/>
<rect x="108" y="290" width="1" height="10" fill="#ff0000"/>
<rect x="108" y="313" width="1" height="9" fill="#ff0000"/>
<path d="M105 300h6v13h-6z M106 301v11h4v-11z" fill="#ff0000" fill-rule="evenodd"/>
<rect x="115" y="287" width="1" height="21" fill="#008000"/>
<rect x="112" y="292" width="6" height="8" fill="#008000"/>
<rect x="122" y="289" width="1" height="1" fill="#ff0000"/>
<rect x="122" y="313" width="1" height="19" fill="#ff0000"/>
<path d="M119 290h6v23h-6z M120 291v21h4v-21z" fill="#ff0000" fill-rule="evenodd"/>
<rect x="129" y="280" width="1" height="34" fill="#008000"/>
<rect x="126" y="300" width="6" height="14" fill="#008000"/>
<rect x="136" y="311" width="1" height="28" fill="#008000"/>
<rect x="133" y="317" width="6" height="9" fill="#008000"/>
<rect x="143" y="328" width="1" height="31" fill="#008000"/>
<rect x="140" y="337" width="6" height="19" fill="#008000"/>
<rect x="150" y="341" width="1" height="10" fill="#ff0000"/>
<rect x="150" y="359" width="1" height="13" fill="#ff0000"/>
<path d="M147 351h6v8h-6z M148 352v6h4v-6z" fill="#ff0000" fill-rule="evenodd"/>
<rect x="157" y="328" width="1" height="1" fill="#ff0000"/>
<rect x="157" y="350" width="1" height="3" fill="#ff0000"/>
<path d="M154 329h6v21h-6z M155 330v19h4v-19z" fill="#ff0000" fill-rule="evenodd"/>
<rect x="164" y="341" width="1" height="40" fill="#008000"/>
<rect x="161" y="341" width="6" height="39" fill="#008000"/>
<rect x="171" y="360" width="1" height="3" fill="#ff0000"/>
<rect x="171" y="380" width="1" height="10" fill="#ff0000"/>
<path d="M168 363h6v17h-6z M169 364v15h4v-15z" fill="#ff0000" fill-rule="evenodd"/>
<rect x="178" y="296" width="1" height="22" fill="#ff0000"/>
<rect x="178" y="362" width="1" height="1" fill="#ff0000"/>
<path d="M175 318h6v44h-6z M176 319v42h4v-42z" fill="#ff0000" fill-rule="evenodd"/>
<rect x="185" y="238" width="1" height="1" fill="#ff0000"/>
<rect x="185" y="303" width="1" height="5" fill="#ff0000"/>
<path d="M182 239h6v64h-6z M183 240v62h4v-62z" fill="#ff0000" fill-rule="evenodd"/>
<rect x="192" y="233" width="1" height="21" fill="#008000"/>
<rect x="189" y="238" width="6" height="7" fill="#008000"/>
<rect x="199" y="234" width="1" height="19" fill="#ff0000"/>
<path d="M196 227h6v7h-6z M197 228v5h4v-5z" fill="#ff0000" fill-rule="evenodd"/>
<rect x="206" y="240" width="1" height="24" fill="#ff0000"/>
<path d="M203 228h6v12h-6z M204 229v10h4v-10z" fill="#ff0000" fill-rule="evenodd"/>
<rect x="213" y="223" width="1" height="27" fill="#008000"/>
<rect x="210" y="227" width="6" height="13" fill="#008000"/>
<rect x="220" y="224" width="1" height="28" fill="#ff0000"/>
<rect x="220" y="253" width="1" height="7" fill="#ff0000"/>
<rect x="217" y="252" width="6" height="1" fill="#ff0000"/>
<rect x="227" y="246" width="1" height="20" fill="#008000"/>
<rect x="224" y="256" width="6" height="1" fill="#008000"/>
<rect x="234" y="226" width="1" height="8" fill="#ff0000"/>
<rect x="234" y="259" width="1" height="6" fill="#ff0000"/>
<path d="M231 234h6v25h-6z M232 235v23h4v-23z" fill="#ff0000" fill-rule="evenodd"/>
<rect x="241" y="192" width="1" height="19" fill="#ff0000"/>
<rect x="241" y="231" width="1" height="1" fill="#ff0000"/>
<path d="M238 211h6v20h-6z M239 212v18h4v-18z" fill="#ff0000" fill-rule="evenodd"/>
<rect x="248" y="205" width="1" height="15" fill="#008000"/>
<rect x="245" y="208" width="6" height="2" fill="#008000"/>
<rect x="255" y="195" width="1" height="31" fill="#ff0000"/>
<rect x="255" y="232" width="1" height="39" fill="#ff0000"/>
<path d="M252 226h6v6h-6z M253 227v4h4v-4z" fill="#ff0000" fill-rule="evenodd"/>
<rect x="262" y="200" width="1" height="8" fill="#ff0000"/>
<rect x="262" y="240" width="1" height="4" fill="#ff0000"/>
<path d="M259 208h6v32h-6z M260 209v30h4v-30z" fill="#ff0000" fill-rule="evenodd"/>
<rect x="269" y="158" width="1" height="12" fill="#ff0000"/>
<path d="M266 170h6v40h-6z M267 171v38h4v-38z" fill="#ff0000" fill-rule="evenodd"/>
<rect x="276" y="165" width="1" height="21" fill="#008000"/>
<rect x="273" y="168" width="6" height="8" fill="#008000"/>
<rect x="283" y="175" width="1" height="24" fill="#008000"/>
<rect x="280" y="181" width="6" height="7" fill="#008000"/>
<rect x="290" y="174" width="1" height="21" fill="#008000"/>
<rect x="287" y="182" width="6" height="5" fill="#008000"/>
<rect x="297" y="173" width="1" height="22" fill="#008000"/>
<rect x="294" y="185" width="6" height="3" fill="#008000"/>
<rect x="304" y="199" width="1" height="46" fill="#008000"/>
<rect x="301" y="199" width="6" height="31" fill="#008000"/>
<rect x="311" y="217" width="1" height="15" fill="#ff0000"/>
<rect x="311" y="237" width="1" height="5" fill="#ff0000"/>
<path d="M308 232h6v5h-6z M309 233v3h4v-3z" fill="#ff0000" fill-rule="evenodd"/>
<rect x="318" y="230" width="1" height="11" fill="#ff0000"/>
<rect x="318" y="251" width="1" height="5" fill="#ff0000"/>
<path d="M315 241h6v10h-6z M316 242v8h4v-8z" fill="#ff0000" fill-rule="evenodd"/>
<rect x="325" y="235" width="1" height="53" fill="#008000"/>
<rect x="322" y="239" width="6" height="48" fill="#008000"/>
<rect x="332" y="281" width="1" height="24" fill="#008000"/>
<rect x="329" y="285" width="6" height="13" fill="#008000"/>
<rect x="339" y="292" width="1" height="17" fill="#008000"/>
<rect x="336" y="299" width="6" height="3" fill="#008000"/>
<rect x="346" y="289" width="1" height="41" fill="#008000"/>
<rect x="343" y="295" width="6" height="33" fill="#008000"/>
<rect x="353" y="324" width="1" height="61" fill="#008000"/>
<rect x="350" y="327" width="6" height="56" fill="#008000"/>
<rect x="360" y="364" width="1" height="13" fill="#ff0000"/>
<rect x="360" y="378" width="1" height="26" fill="#ff0000"/>
<rect x="357" y="377" width="6" height="1" fill="#ff0000"/>
<rect x="367" y="349" width="1" height="40" fill="#008000"/>
<rect x="364" y="371" width="6" height="2" fill="#008000"/>
<rect x="374" y="354" width="1" height="1" fill="#ff0000"/>
<rect x="374" y="370" width="1" height="8" fill="#ff0000"/>
<path d="M371 355h6v15h-6z M372 356v13h4v-13z" fill="#ff0000" fill-rule="evenodd"/>
<rect x="381" y="360" width="1" height="41" fill="#008000"/>
<rect x="378" y="360" width="6" height="38" fill="#008000"/>
<rect x="388" y="350" width="1" height="12" fill="#ff0000"/>
<rect x="388" y="396" width="1" height="7" fill="#ff0000"/>
<path d="M385 362h6v34h-6z M386 363v32h4v-32z" fill="#ff0000" fill-rule="evenodd"/>
<rect x="395" y="349" width="1" height="21" fill="#008000"/>
<rect x="392" y="352" width="6" height="15" fill="#008000"/>
<rect x="402" y="338" width="1" height="5" fill="#ff0000"/>
<rect x="402" y="375" width="1" height="5" fill="#ff0000"/>
<path d="M399 343h6v32h-6z M400 344v30h4v-30z" fill="#ff0000" fill-rule="evenodd"/>
<rect x="409" y="348" width="1" height="14" fill="#008000"/>
<rect x="406" y="348" width="6" height="4" fill="#008000"/>
<rect x="416" y="362" width="1" height="31" fill="#008000"/>
<rect x="413" y="362" width="6" height="23" fill="#008000"/>
<rect x="423" y="391" width="1" height="57" fill="#008000"/>
<rect x="420" y="391" width="6" height="42" fill="#008000"/>
<rect x="430" y="424" width="1" height="7" fill="#ff0000"/>
<rect x="430" y="448" width="1" height="6" fill="#ff0000"/>
<path d="M427 431h6v17h-6z M428 432v15h4v-15z" fill="#ff0000" fill-rule="evenodd"/>
<rect x="437" y="412" width="1" height="32" fill="#008000"/>
<rect x="434" y="431" width="6" height="4" fill="#008000"/>
<rect x="444" y="419" width="1" height="38" fill="#008000"/>
<rect x="441" y="438" width="6" height="18" fill="#008000"/>
<rect x="451" y="454" width="1" height="27" fill="#008000"/>
<rect x="448" y="461" width="6" height="13" fill="#008000"/>
<rect x="458" y="458" width="1" height="33" fill="#008000"/>
<rect x="455" y="471" width="6" height="8" fill="#008000"/>
<rect x="465" y="456" width="1" height="1" fill="#ff0000"/>
<rect x="465" y="482" width="1" height="8" fill="#ff0000"/>
<path d="M462 457h6v25h-6z M463 458v23h4v-23z" fill="#ff0000" fill-rule="evenodd"/>
<rect x="472" y="457" width="1" height="21" fill="#008000"/>
<rect x="469" y="460" width="6" height="1" fill="#008000"/>
<rect x="479" y="447" width="1" height="14" fill="#ff0000"/>
<rect x="479" y="462" width="1" height="11" fill="#ff0000"/>
<rect x="476" y="461" width="6" height="1" fill="#ff0000"/>
<rect x="486" y="469" width="1" height="21" fill="#008000"/>
<rect x="483" y="469" width="6" height="16" fill="#008000"/>
<rect x="493" y="485" width="1" height="26" fill="#008000"/>
<rect x="490" y="489" width="6" height="13" fill="#008000"/>
<rect x="500" y="475" width="1" height="6" fill="#ff0000"/>
<path d="M497 481h6v20h-6z M498 482v18h4v-18z" fill="#ff0000" fill-rule="evenodd"/>
<rect x="507" y="424" width="1" height="1" fill="#ff0000"/>
<rect x="507" y="479" width="1" height="1" fill="#ff0000"/>
<path d="M504 425h6v54h-6z M505 426v52h4v-52z" fill="#ff0000" fill-rule="evenodd"/>
<rect x="514" y="425" width="1" height="16" fill="#008000"/>
<rect x="511" y="430" width="6" height="7" fill="#008000"/>
<rect x="521" y="413" width="1" height="9" fill="#ff0000"/>
<rect x="521" y="443" width="1" height="4" fill="#ff0000"/>
<path d="M518 422h6v21h-6z M519 423v19h4v-19z" fill="#ff0000" fill-rule="evenodd"/>
<rect x="528" y="435" width="1" height="18" fill="#008000"/>
<rect x="525" y="435" width="6" height="14" fill="#008000"/>
<rect x="535" y="431" width="1" height="11" fill="#ff0000"/>
<rect x="535" y="445" width="1" height="12" fill="#ff0000"/>
<path d="M532 442h6v3h-6z M533 443v1h4v-1z" fill="#ff0000" fill-rule="evenodd"/>
<rect x="542" y="425" width="1" height="3" fill="#ff0000"/>
<rect x="542" y="437" width="1" height="3" fill="#ff0000"/>
<path d="M539 428h6v9h-6z M540 429v7h4v-7z" fill="#ff0000" fill-rule="evenodd"/>
<rect x="549" y="433" width="1" height="18" fill="#008000"/>
<rect x="546" y="433" width="6" height="16" fill="#008000"/>
<rect x="556" y="463" width="1" height="9" fill="#ff0000"/>
<path d="M553 434h6v29h-6z M554 435v27h4v-27z" fill="#ff0000" fill-rule="evenodd"/>
<rect x="563" y="379" width="1" height="2" fill="#ff0000"/>
<path d="M560 381h6v46h-6z M561 382v44h4v-44z" fill="#ff0000" fill-rule="evenodd"/>
<rect x="570" y="349" width="1" height="10" fill="#ff0000"/>
<rect x="570" y="381" width="1" height="5" fill="#ff0000"/>
<path d="M567 359h6v22h-6z M568 360v20h4v-20z" fill="#ff0000" fill-rule="evenodd"/>
<rect x="577" y="350" width="1" height="1" fill="#ff0000"/>
<rect x="577" y="359" width="1" height="9" fill="#ff0000"/>
<path d="M574 351h6v8h-6z M575 352v6h4v-6z" fill="#ff0000" fill-rule="evenodd"/>
<rect x="584" y="335" width="1" height="33" fill="#008000"/>
<rect x="581" y="355" width="6" height="11" fill="#008000"/>
<rect x="591" y="367" width="1" height="3" fill="#ff0000"/>
<path d="M588 343h6v24h-6z M589 344v22h4v-22z" fill="#ff0000" fill-rule="evenodd"/>
<rect x="598" y="317" width="1" height="1" fill="#ff0000"/>
<rect x="598" y="332" width="1" height="9" fill="#ff0000"/>
<path d="M595 318h6v14h-6z M596 319v12h4v-12z" fill="#ff0000" fill-rule="evenodd"/>
<rect x="605" y="320" width="1" height="27" fill="#008000"/>
<rect x="602" y="320" width="6" height="19" fill="#008000"/>
<rect x="612" y="296" width="1" height="13" fill="#ff0000"/>
<rect x="612" y="342" width="1" height="7" fill="#ff0000"/>
<path d="M609 309h6v33h-6z M610 310v31h4v-31z" fill="#ff0000" fill-rule="evenodd"/>
<rect x="619" y="265" width="1" height="52" fill="#008000"/>
<rect x="616" y="296" width="6" height="18" fill="#008000"/>
<rect x="626" y="323" width="1" height="43" fill="#008000"/>
<rect x="623" y="323" width="6" height="23" fill="#008000"/>
<rect x="633" y="364" width="1" height="52" fill="#008000"/>
<rect x="630" y="364" width="6" height="29" fill="#008000"/>
<rect x="640" y="380" width="1" height="77" fill="#008000"/>
<rect x="637" y="393" width="6" height="55" fill="#008000"/>
<rect x="647" y="438" width="1" height="1" fill="#ff0000"/>
<rect x="647" y="457" width="1" height="15" fill="#ff0000"/>
<path d="M644 439h6v18h-6z M645 440v16h4v-16z" fill="#ff0000" fill-rule="evenodd"/>
<rect x="654" y="404" width="1" height="27" fill="#ff0000"/>
<rect x="654" y="434" width="1" height="11" fill="#ff0000"/>
<path d="M651 431h6v3h-6z M652 432v1h4v-1z" fill="#ff0000" fill-rule="evenodd"/>
<rect x="661" y="417" width="1" height="2" fill="#ff0000"/>
<rect x="661" y="439" width="1" height="26" fill="#ff0000"/>
<path d="M658 419h6v20h-6z M659 420v18h4v-18z" fill="#ff0000" fill-rule="evenodd"/>
<rect x="668" y="391" width="1" height="4" fill="#ff0000"/>
<rect x="668" y="425" width="1" height="7" fill="#ff0000"/>
<path d="M665 395h6v30h-6z M666 396v28h4v-28z" fill="#ff0000" fill-rule="evenodd"/>
<rect x="675" y="397" width="1" height="3" fill="#ff0000"/>
<rect x="675" y="404" width="1" height="23" fill="#ff0000"/>
<path d="M672 400h6v4h-6z M673 401v2h4v-2z" fill="#ff0000" fill-rule="evenodd"/>
<rect x="682" y="397" width="1" height="30" fill="#008000"/>
<rect x="679" y="398" width="6" height="25" fill="#008000"/>
<rect x="689" y="407" width="1" height="8" fill="#ff0000"/>
<rect x="689" y="427" width="1" height="25" fill="#ff0000"/>
<path d="M686 415h6v12h-6z M687 416v10h4v-10z" fill="#ff0000" fill-rule="evenodd"/>
<rect x="696" y="391" width="1" height="37" fill="#008000"/>
<rect x="693" y="417" width="6" height="1" fill="#008000"/>
<rect x="703" y="437" width="1" height="60" fill="#008000"/>
<rect x="700" y="437" width="6" height="55" fill="#008000"/>
<rect x="710" y="481" width="1" height="9" fill="#ff0000"/>
<rect x="710" y="498" width="1" height="12" fill="#ff0000"/>
<path d="M707 490h6v8h-6z M708 491v6h4v-6z" fill="#ff0000" fill-rule="evenodd"/>
<rect x="717" y="477" width="1" height="17" fill="#ff0000"/>
<rect x="717" y="496" width="1" height="29" fill="#ff0000"/>
<rect x="714" y="494" width="6" height="2" fill="#ff0000"/>
<rect x="724" y="454" width="1" height="13" fill="#ff0000"/>
<rect x="724" y="490" width="1" height="6" fill="#ff0000"/>
<path d="M721 467h6v23h-6z M722 468v21h4v-21z" fill="#ff0000" fill-rule="evenodd"/>
<rect x="731" y="469" width="1" height="34" fill="#008000"/>
<rect x="728" y="480" width="6" height="6" fill="#008000"/>
<rect x="738" y="460" width="1" height="1" fill="#ff0000"/>
<rect x="738" y="479" width="1" height="13" fill="#ff0000"/>
<path d="M735 461h6v18h-6z M736 462v16h4v-16z" fill="#ff0000" fill-rule="evenodd"/>
<rect x="745" y="448" width="1" height="17" fill="#008000"/>
<rect x="742" y="458" width="6" height="1" fill="#008000"/>
<rect x="752" y="463" width="1" height="1" fill="#ff0000"/>
<rect x="752" y="466" width="1" height="23" fill="#ff0000"/>
<rect x="749" y="464" width="6" height="2" fill="#ff0000"/>
<rect x="759" y="453" width="1" height="48" fill="#008000"/>
<rect x="756" y="469" width="6" height="31" fill="#008000"/>
<rect x="766" y="424" width="1" height="6" fill="#ff0000"/>
<rect x="766" y="507" width="1" height="2" fill="#ff0000"/>
<path d="M763 430h6v77h-6z M764 431v75h4v-75z" fill="#ff0000" fill-rule="evenodd"/>
<rect x="773" y="397" width="1" height="10" fill="#ff0000"/>
<rect x="773" y="426" width="1" height="10" fill="#ff0000"/>
<path d="M770 407h6v19h-6z M771 408v17h4v-17z" fill="#ff0000" fill-rule="evenodd"/>
<rect x="780" y="390" width="1" height="15" fill="#ff0000"/>
<rect x="780" y="410" width="1" height="8" fill="#ff0000"/>
<path d="M777 405h6v5h-6z M778 406v3h4v-3z" fill="#ff0000" fill-rule="evenodd"/>
<rect x="787" y="397" width="1" height="21" fill="#008000"/>
<rect x="784" y="401" width="6" height="9" fill="#008000"/>
<rect x="794" y="398" width="1" height="39" fill="#008000"/>
<rect x="791" y="414" width="6" height="18" fill="#008000"/>
<rect x="801" y="415" width="1" height="31" fill="#008000"/>
<rect x="798" y="431" width="6" height="7" fill="#008000"/>
<rect x="808" y="431" width="1" height="29" fill="#008000"/>
<rect x="805" y="436" width="6" height="13" fill="#008000"/>
<rect x="815" y="427" width="1" height="4" fill="#ff0000"/>
<rect x="815" y="452" width="1" height="3" fill="#ff0000"/>
<path d="M812 431h6v21h-6z M813 432v19h4v-19z" fill="#ff0000" fill-rule="evenodd"/>
<rect x="822" y="415" width="1" height="1" fill="#ff0000"/>
<rect x="822" y="428" width="1" height="4" fill="#ff0000"/>
<path d="M819 416h6v12h-6z M820 417v10h4v-10z" fill="#ff0000" fill-rule="evenodd"/>
<rect x="829" y="408" width="1" height="35" fill="#008000"/>
<rect x="826" y="410" width="6" height="25" fill="#008000"/>
<rect x="836" y="415" width="1" height="1" fill="#ff0000"/>
<rect x="836" y="443" width="1" height="3" fill="#ff0000"/>
<path d="M833 416h6v27h-6z M834 417v25h4v-25z" fill="#ff0000" fill-rule="evenodd"/>
<rect x="843" y="360" width="1" height="6" fill="#ff0000"/>
<rect x="843" y="423" width="1" height="2" fill="#ff0000"/>
<path d="M840 366h6v57h-6z M841 367v55h4v-55z" fill="#ff0000" fill-rule="evenodd"/>
<rect x="850" y="352" width="1" height="5" fill="#ff0000"/>
<rect x="850" y="363" width="1" height="6" fill="#ff0000"/>
<path d="M847 357h6v6h-6z M848 358v4h4v-4z" fill="#ff0000" fill-rule="evenodd"/>
<rect x="857" y="304" width="1" height="16" fill="#ff0000"/>
<rect x="857" y="356" width="1" height="10" fill="#ff0000"/>
<path d="M854 320h6v36h-6z M855 321v34h4v-34z" fill="#ff0000" fill-rule="evenodd"/>
<rect x="864" y="314" width="1" height="11" fill="#ff0000"/>
<rect x="864" y="326" width="1" height="12" fill="#ff0000"/>
<rect x="861" y="325" width="6" height="1" fill="#ff0000"/>
<rect x="871" y="320" width="1" height="3" fill="#ff0000"/>
<rect x="871" y="328" width="1" height="14" fill="#ff0000"/>
<path d="M868 323h6v5h-6z M869 324v3h4v-3z" fill="#ff0000" fill-rule="evenodd"/>
<rect x="878" y="330" width="1" height="36" fill="#008000"/>
<rect x="875" y="330" width="6" height="31" fill="#008000"/>
<rect x="885" y="348" width="1" height="9" fill="#ff0000"/>
<rect x="885" y="367" width="1" height="7" fill="#ff0000"/>
<path d="M882 357h6v10h-6z M883 358v8h4v-8z" fill="#ff0000" fill-rule="evenodd"/>
<rect x="892" y="351" width="1" height="18" fill="#008000"/>
<rect x="889" y="352" width="6" height="13" fill="#008000"/>
<rect x="899" y="364" width="1" height="2" fill="#ff0000"/>
<rect x="899" y="374" width="1" height="14" fill="#ff0000"/>
<path d="M896 366h6v8h-6z M897 367v6h4v-6z" fill="#ff0000" fill-rule="evenodd"/>
<rect x="906" y="361" width="1" height="47" fill="#008000"/>
<rect x="903" y="381" width="6" height="26" fill="#008000"/>
<rect x="913" y="396" width="1" height="2" fill="#ff0000"/>
<rect x="913" y="411" width="1" height="21" fill="#ff0000"/>
<path d="M910 398h6v13h-6z M911 399v11h4v-11z" fill="#ff0000" fill-rule="evenodd"/>
<rect x="920" y="395" width="1" height="21" fill="#008000"/>
<rect x="917" y="404" width="6" height="1" fill="#008000"/>
<rect x="927" y="395" width="1" height="24" fill="#008000"/>
<rect x="924" y="409" width="6" height="9" fill="#008000"/>
<rect x="934" y="408" width="1" height="38" fill="#008000"/>
<rect x="931" y="414" width="6" height="31" fill="#008000"/>
<rect x="941" y="446" width="1" height="45" fill="#008000"/>
<rect x="938" y="449" width="6" height="38" fill="#008000"/>
<rect x="948" y="464" width="1" height="1" fill="#ff0000"/>
<rect x="948" y="489" width="1" height="5" fill="#ff0000"/>
<path d="M945 465h6v24h-6z M946 466v22h4v-22z" fill="#ff0000" fill-rule="evenodd"/>
<rect x="955" y="454" width="1" height="4" fill="#ff0000"/>
<rect x="955" y="465" width="1" height="5" fill="#ff0000"/>
<path d="M952 458h6v7h-6z M953 459v5h4v-5z" fill="#ff0000" fill-rule="evenodd"/>
<rect x="962" y="454" width="1" height="2" fill="#ff0000"/>
<rect x="962" y="463" width="1" height="19" fill="#ff0000"/>
<path d="M959 456h6v7h-6z M960 457v5h4v-5z" fill="#ff0000" fill-rule="evenodd"/>
<rect x="969" y="442" width="1" height="13" fill="#ff0000"/>
<rect x="969" y="460" width="1" height="4" fill="#ff0000"/>
<path d="M966 455h6v5h-6z M967 456v3h4v-3z" fill="#ff0000" fill-rule="evenodd"/>
<rect x="976" y="461" width="1" height="19" fill="#008000"/>
<rect x="973" y="462" width="6" height="16" fill="#008000"/>
<rect x="983" y="444" width="1" height="27" fill="#ff0000"/>
<rect x="983" y="483" width="1" height="1" fill="#ff0000"/>
<path d="M980 471h6v12h-6z M981 472v10h4v-10z" fill="#ff0000" fill-rule="evenodd"/>
<rect x="990" y="466" width="1" height="24" fill="#008000"/>
<rect x="987" y="470" width="6" height="7" fill="#008000"/>
<rect x="997" y="415" width="1" height="9" fill="#ff0000"/>
<path d="M994 424h6v38h-6z M995 425v36h4v-36z" fill="#ff0000" fill-rule="evenodd"/>
<rect x="1004" y="415" width="1" height="21" fill="#008000"/>
<rect x="1001" y="421" width="6" height="5" fill="#008000"/>
<rect x="1011" y="420" width="1" height="17" fill="#008000"/>
<rect x="1008" y="428" width="6" height="1" fill="#008000"/>
<rect x="1018" y="432" width="1" height="30" fill="#008000"/>
<rect x="1015" y="435" width="6" height="24" fill="#008000"/>
<rect x="70" y="547" width="6" height="39" fill="#008000"/>
<rect x="77" y="557" width="6" height="29" fill="#008000"/>
<rect x="84" y="536" width="6" height="50" fill="#008000"/>
<path d="M91 545h6v41h-6z M92 546v41h4v-41z" fill="#ff0000" fill-rule="evenodd"/>
<rect x="98" y="549" width="6" height="37" fill="#008000"/>
<path d="M105 556h6v30h-6z M106 557v30h4v-30z" fill="#ff0000" fill-rule="evenodd"/>
<rect x="112" y="561" width="6" height="25" fill="#008000"/>
<path d="M119 555h6v31h-6z M120 556v31h4v-31z" fill="#ff0000" fill-rule="evenodd"/>
<rect x="126" y="552" width="6" height="34" fill="#008000"/>
<rect x="133" y="559" width="6" height="27" fill="#008000"/>
<rect x="140" y="559" width="6" height="27" fill="#008000"/>
<path d="M147 564h6v22h-6z M148 565v22h4v-22z" fill="#ff0000" fill-rule="evenodd"/>
<path d="M154 560h6v26h-6z M155 561v26h4v-26z" fill="#ff0000" fill-rule="evenodd"/>
<rect x="161" y="557" width="6" height="29" fill="#008000"/>
<path d="M168 558h6v28h-6z M169 559v28h4v-28z" fill="#ff0000" fill-rule="evenodd"/>
<path d="M175 542h6v44h-6z M176 543v44h4v-44z" fill="#ff0000" fill-rule="evenodd"/>
<path d="M182 530h6v56h-6z M183 531v56h4v-56z" fill="#ff0000" fill-rule="evenodd"/>
<rect x="189" y="543" width="6" height="43" fill="#008000"/>
<path d="M196 545h6v41h-6z M197 546v41h4v-41z" fill="#ff0000" fill-rule="evenodd"/>
<path d="M203 538h6v48h-6z M204 539v48h4v-48z" fill="#ff0000" fill-rule="evenodd"/>
<rect x="210" y="547" width="6" height="39" fill="#008000"/>
<path d="M217 549h6v37h-6z M218 550v37h4v-37z" fill="#ff0000" fill-rule="evenodd"/>
<rect x="224" y="552" width="6" height="34" fill="#008000"/>
<path d="M231 546h6v40h-6z M232 547v40h4v-40z" fill="#ff0000" fill-rule="evenodd"/>
<path d="M238 539h6v47h-6z M239 540v47h4v-47z" fill="#ff0000" fill-rule="evenodd"/>
<rect x="245" y="549" width="6" height="37" fill="#008000"/>
<path d="M252 524h6v62h-6z M253 525v62h4v-62z" fill="#ff0000" fill-rule="evenodd"/>
<path d="M259 547h6v39h-6z M260 548v39h4v-39z" fill="#ff0000" fill-rule="evenodd"/>
<path d="M266 530h6v56h-6z M267 531v56h4v-56z" fill="#ff0000" fill-rule="evenodd"/>
<rect x="273" y="544" width="6" height="42" fill="#008000"/>
<rect x="280" y="551" width="6" height="35" fill="#008000"/>
<rect x="287" y="555" width="6" height="31" fill="#008000"/>
<rect x="294" y="549" width="6" height="37" fill="#008000"/>
<rect x="301" y="549" width="6" height="37" fill="#008000"/>
<path d="M308 557h6v29h-6z M309 558v29h4v-29z" fill="#ff0000" fill-rule="evenodd"/>
<path d="M315 558h6v28h-6z M316 559v28h4v-28z" fill="#ff0000" fill-rule="evenodd"/>
<rect x="322" y="552" width="6" height="34" fill="#008000"/>
<rect x="329" y="560" width="6" height="26" fill="#008000"/>
<rect x="336" y="566" width="6" height="20" fill="#008000"/>
<rect x="343" y="562" width="6" height="24" fill="#008000"/>
<rect x="350" y="557" width="6" height="29" fill="#008000"/>
<path d="M357 564h6v22h-6z M358 565v22h4v-22z" fill="#ff0000" fill-rule="evenodd"/>
<rect x="364" y="563" width="6" height="23" fill="#008000"/>
<path d="M371 565h6v21h-6z M372 566v21h4v-21z" fill="#ff0000" fill-rule="evenodd"/>
<rect x="378" y="560" width="6" height="26" fill="#008000"/>
<path d="M385 561h6v25h-6z M386 562v25h4v-25z" fill="#ff0000" fill-rule="evenodd"/>
<rect x="392" y="562" width="6" height="24" fill="#008000"/>
<path d="M399 560h6v26h-6z M400 561v26h4v-26z" fill="#ff0000" fill-rule="evenodd"/>
<rect x="406" y="564" width="6" height="22" fill="#008000"/>
<rect x="413" y="558" width="6" height="28" fill="#008000"/>
<rect x="420" y="556" width="6" height="30" fill="#008000"/>
<path d="M427 566h6v20h-6z M428 567v20h4v-20z" fill="#ff0000" fill-rule="evenodd"/>
<rect x="434" y="563" width="6" height="23" fill="#008000"/>
<rect x="441" y="561" width="6" height="25" fill="#008000"/>
<rect x="448" y="561" width="6" height="25" fill="#008000"/>
<rect x="455" y="565" width="6" height="21" fill="#008000"/>
<path d="M462 563h6v23h-6z M463 564v23h4v-23z" fill="#ff0000" fill-rule="evenodd"/>
<rect x="469" y="564" width="6" height="22" fill="#008000"/>
<path d="M476 562h6v24h-6z M477 563v24h4v-24z" fill="#ff0000" fill-rule="evenodd"/>
<rect x="483" y="565" width="6" height="21" fill="#008000"/>
<rect x="490" y="569" width="6" height="17" fill="#008000"/>
<path d="M497 567h6v19h-6z M498 568v19h4v-19z" fill="#ff0000" fill-rule="evenodd"/>
<path d="M504 553h6v33h-6z M505 554v33h4v-33z" fill="#ff0000" fill-rule="evenodd"/>
<rect x="511" y="558" width="6" height="28" fill="#008000"/>
<path d="M518 555h6v31h-6z M519 556v31h4v-31z" fill="#ff0000" fill-rule="evenodd"/>
<rect x="525" y="556" width="6" height="30" fill="#008000"/>
<path d="M532 563h6v23h-6z M533 564v23h4v-23z" fill="#ff0000" fill-rule="evenodd"/>
<path d="M539 562h6v24h-6z M540 563v24h4v-24z" fill="#ff0000" fill-rule="evenodd"/>
<rect x="546" y="566" width="6" height="20" fill="#008000"/>
<path d="M553 562h6v24h-6z M554 563v24h4v-24z" fill="#ff0000" fill-rule="evenodd"/>
<path d="M560 543h6v43h-6z M561 544v43h4v-43z" fill="#ff0000" fill-rule="evenodd"/>
<path d="M567 536h6v50h-6z M568 537v50h4v-50z" fill="#ff0000" fill-rule="evenodd"/>
<path d="M574 542h6v44h-6z M575 543v44h4v-44z" fill="#ff0000" fill-rule="evenodd"/>
<rect x="581" y="535" width="6" height="51" fill="#008000"/>
<path d="M588 548h6v38h-6z M589 549v38h4v-38z" fill="#ff0000" fill-rule="evenodd"/>
<path d="M595 537h6v49h-6z M596 538v49h4v-49z" fill="#ff0000" fill-rule="evenodd"/>
<rect x="602" y="536" width="6" height="50" fill="#008000"/>
<path d="M609 533h6v53h-6z M610 534v53h4v-53z" fill="#ff0000" fill-rule="evenodd"/>
<rect x="616" y="531" width="6" height="55" fill="#008000"/>
<rect x="623" y="545" width="6" height="41" fill="#008000"/>
<rect x="630" y="543" width="6" height="43" fill="#008000"/>
<rect x="637" y="537" width="6" height="49" fill="#008000"/>
<path d="M644 548h6v38h-6z M645 549v38h4v-38z" fill="#ff0000" fill-rule="evenodd"/>
<path d="M651 540h6v46h-6z M652 541v46h4v-46z" fill="#ff0000" fill-rule="evenodd"/>
<path d="M658 548h6v38h-6z M659 549v38h4v-38z" fill="#ff0000" fill-rule="evenodd"/>
<path d="M665 542h6v44h-6z M666 543v44h4v-44z" fill="#ff0000" fill-rule="evenodd"/>
<path d="M672 546h6v40h-6z M673 547v40h4v-40z" fill="#ff0000" fill-rule="evenodd"/>
<rect x="679" y="549" width="6" height="37" fill="#008000"/>
<path d="M686 549h6v37h-6z M687 550v37h4v-37z" fill="#ff0000" fill-rule="evenodd"/>
<rect x="693" y="551" width="6" height="35" fill="#008000"/>
<rect x="700" y="546" width="6" height="40" fill="#008000"/>
<path d="M707 555h6v31h-6z M708 556v31h4v-31z" fill="#ff0000" fill-rule="evenodd"/>
<path d="M714 552h6v34h-6z M715 553v34h4v-34z" fill="#ff0000" fill-rule="evenodd"/>
<path d="M721 552h6v34h-6z M722 553v34h4v-34z" fill="#ff0000" fill-rule="evenodd"/>
<rect x="728" y="557" width="6" height="29" fill="#008000"/>
<path d="M735 557h6v29h-6z M736 558v29h4v-29z" fill="#ff0000" fill-rule="evenodd"/>
<rect x="742" y="553" width="6" height="33" fill="#008000"/>
<path d="M749 554h6v32h-6z M750 555v32h4v-32z" fill="#ff0000" fill-rule="evenodd"/>
<rect x="756" y="548" width="6" height="38" fill="#008000"/>
<path d="M763 535h6v51h-6z M764 536v51h4v-51z" fill="#ff0000" fill-rule="evenodd"/>
<path d="M770 534h6v52h-6z M771 535v52h4v-52z" fill="#ff0000" fill-rule="evenodd"/>
<path d="M777 540h6v46h-6z M778 541v46h4v-46z" fill="#ff0000" fill-rule="evenodd"/>
<rect x="784" y="551" width="6" height="35" fill="#008000"/>
<rect x="791" y="545" width="6" height="41" fill="#008000"/>
<rect x="798" y="544" width="6" height="42" fill="#008000"/>
<rect x="805" y="554" width="6" height="32" fill="#008000"/>
<path d="M812 558h6v28h-6z M813 559v28h4v-28z" fill="#ff0000" fill-rule="evenodd"/>
<path d="M819 551h6v35h-6z M820 552v35h4v-35z" fill="#ff0000" fill-rule="evenodd"/>
<rect x="826" y="549" width="6" height="37" fill="#008000"/>
<path d="M833 558h6v28h-6z M834 559v28h4v-28z" fill="#ff0000" fill-rule="evenodd"/>
<path d="M840 539h6v47h-6z M841 540v47h4v-47z" fill="#ff0000" fill-rule="evenodd"/>
<path d="M847 550h6v36h-6z M848 551v36h4v-36z" fill="#ff0000" fill-rule="evenodd"/>
<path d="M854 531h6v55h-6z M855 532v55h4v-55z" fill="#ff0000" fill-rule="evenodd"/>
<path d="M861 540h6v46h-6z M862 541v46h4v-46z" fill="#ff0000" fill-rule="evenodd"/>
<path d="M868 551h6v35h-6z M869 552v35h4v-35z" fill="#ff0000" fill-rule="evenodd"/>
<rect x="875" y="549" width="6" height="37" fill="#008000"/>
<path d="M882 556h6v30h-6z M883 557v30h4v-30z" fill="#ff0000" fill-rule="evenodd"/>
<rect x="889" y="556" width="6" height="30" fill="#008000"/>
<path d="M896 557h6v29h-6z M897 558v29h4v-29z" fill="#ff0000" fill-rule="evenodd"/>
<rect x="903" y="554" width="6" height="32" fill="#008000"/>
<path d="M910 553h6v33h-6z M911 554v33h4v-33z" fill="#ff0000" fill-rule="evenodd"/>
<rect x="917" y="560" width="6" height="26" fill="#008000"/>
<rect x="924" y="560" width="6" height="26" fill="#008000"/>
<rect x="931" y="555" width="6" height="31" fill="#008000"/>
<rect x="938" y="556" width="6" height="30" fill="#008000"/>
<path d="M945 561h6v25h-6z M946 562v25h4v-25z" fill="#ff0000" fill-rule="evenodd"/>
<path d="M952 562h6v24h-6z M953 563v24h4v-24z" fill="#ff0000" fill-rule="evenodd"/>
<path d="M959 560h6v26h-6z M960 561v26h4v-26z" fill="#ff0000" fill-rule="evenodd"/>
<path d="M966 562h6v24h-6z M967 563v24h4v-24z" fill="#ff0000" fill-rule="evenodd"/>
<rect x="973" y="562" width="6" height="24" fill="#008000"/>
<path d="M980 561h6v25h-6z M981 562v25h4v-25z" fill="#ff0000" fill-rule="evenodd"/>
<rect x="987" y="561" width="6" height="25" fill="#008000"/>
<path d="M994 546h6v40h-6z M995 547v40h4v-40z" fill="#ff0000" fill-rule="evenodd"/>
<rect x="1001" y="553" width="6" height="33" fill="#008000"/>
<rect x="1008" y="563" width="6" height="23" fill="#008000"/>
<rect x="1015" y="561" width="6" height="25" fill="#008000"/>
<g style="shape-rendering:auto">
<path d="M269.5 158.5L289 163.5" stroke="#0000ff" stroke-width="1" fill="none"/>
<text x="289.5" y="174" font-family="Liberation Sans, sans-serif" font-size="12" fill="#0000ff" textLength="58" lengthAdjust="spacingAndGlyphs">2260.8701</text>
<path d="M717.5 524.5L737 518.5" stroke="#0000ff" stroke-width="1" fill="none"/>
<text x="738" y="522" font-family="Liberation Sans, sans-serif" font-size="12" fill="#0000ff" textLength="58" lengthAdjust="spacingAndGlyphs">1974.3800</text>
</g>
<path d="M349 155h7l-3.5 4z" fill="#000"/>
<g font-family="Liberation Mono, monospace" font-size="12" fill="#404040" text-anchor="end">
<text x="14.00 20.00 26.00 32.00 38.30 44.00 50.00 56.00 62.00" y="522.5" font-family="Liberation Serif, serif" font-size="12" fill="#404040" stroke="#404040" stroke-width="0.1" style="shape-rendering:auto">1974.3800</text>
<text x="14.00 20.00 26.00 32.00 38.00 44.00 50.00 56.00 62.00" y="546.5" font-family="Liberation Serif, serif" font-size="12" fill="#404040" stroke="#404040" stroke-width="0.1" style="shape-rendering:auto">126750535</text>
<text x="20.00 26.00 32.00 38.00 44.00 50.00 56.00 62.00" y="562.5" font-family="Liberation Serif, serif" font-size="12" fill="#404040" stroke="#404040" stroke-width="0.1" style="shape-rendering:auto">84500357</text>
<text x="20.00 26.00 32.00 38.00 44.00 50.00 56.00 62.00" y="578.5" font-family="Liberation Serif, serif" font-size="12" fill="#404040" stroke="#404040" stroke-width="0.1" style="shape-rendering:auto">42250178</text>
</g>
<text x="2" y="144.3" font-family="Liberation Mono, Noto Serif CJK SC, serif" font-size="13" font-weight="500" fill="#0000ff" stroke="#0000ff" stroke-width="0.25" textLength="32.5" lengthAdjust="spacingAndGlyphs">日<tspan font-size="12" font-weight="700">K</tspan>线</text>
<text x="1140.00 1145.07 1153.00 1159.50 1166.00 1172.50" y="153.5" font-family="Liberation Serif, serif" font-size="13" fill="#0000ff" stroke="#0000ff" stroke-width="0.2" style="shape-rendering:auto">1A0001</text>
<text x="1188.5" y="153.5" font-family="Noto Serif CJK SC, serif" font-size="13" font-weight="500" fill="#0000ff" stroke="#0000ff" stroke-width="0.2" textLength="51" lengthAdjust="spacingAndGlyphs">上证指数</text>
<text x="1090" y="572.5" font-family="Noto Serif CJK SC, serif" font-size="29" font-weight="300" fill="#ff0000" textLength="152" lengthAdjust="spacingAndGlyphs" style="shape-rendering:auto">赢家财富网</text>
<rect x="1242" y="127" width="4" height="459" fill="#fff"/>
<rect x="1240" y="127" width="2" height="459" fill="#a0a0a0"/>
</svg>
</body></html>
